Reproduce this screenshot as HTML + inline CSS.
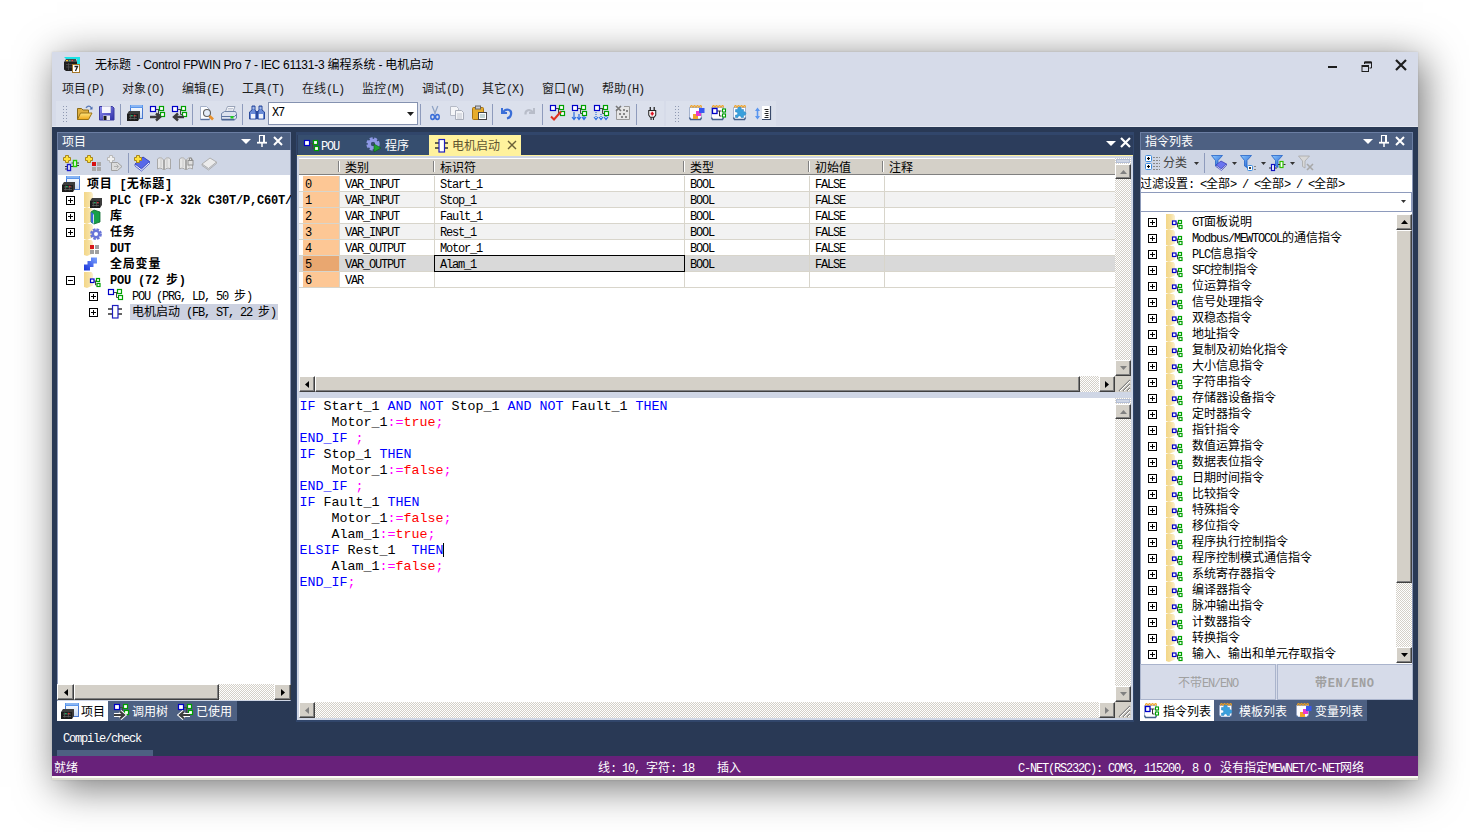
<!DOCTYPE html><html lang="zh"><head><meta charset="utf-8"><title>Control FPWIN Pro 7</title><style>
html,body{margin:0;padding:0}
body{width:1470px;height:832px;background:#fff;position:relative;overflow:hidden;
 font-family:"Liberation Mono","Noto Sans CJK SC",monospace;font-size:12px;color:#000}
.a{position:absolute;box-sizing:border-box}
.t{white-space:pre;padding-top:1px}
.l{font-family:"Liberation Mono",monospace;font-size:12px;letter-spacing:-1.2px}
.b{font-weight:bold;letter-spacing:0.8px}
.b .l{letter-spacing:-0.2px}
.w{color:#fff}
#win{left:52px;top:52px;width:1366px;height:728px;background:#d6dbe9;
 box-shadow:5px 7px 38px rgba(0,0,0,.56),0 0 2px rgba(0,0,0,.12)}
.code{font-family:"Liberation Mono",monospace;font-size:13.333px;white-space:pre}
.k{color:#0000ff}.p{color:#ff00ff}.r{color:#ff0000}
.dot{background-image:conic-gradient(#fff 25%,#d4d0c8 0 50%,#fff 0 75%,#d4d0c8 0);background-size:2px 2px}
.btn{background:#d4d0c8;border:1px solid;border-color:#fff #404040 #404040 #fff;box-shadow:inset -1px -1px 0 #808080}
svg{position:absolute;overflow:visible}
</style></head><body>
<div id="win" class="a"></div>
<div class="a t" style="left:95px;top:56px;height:16px;line-height:16px;font-family:'Liberation Sans','Noto Sans CJK SC',sans-serif;font-size:12px;color:#000">无标题<span style="letter-spacing:-0.27px;padding-left:2.5px"> - Control FPWIN Pro 7 - IEC 61131-3 </span>编程系统<span style="letter-spacing:-0.27px"> - </span>电机启动</div>
<svg style="left:64px;top:57px" width="16" height="16" viewBox="0 0 16 16"><path d="M0 0h16v7h-3V2H2z" fill="#19e3e6"/><path d="M0 5l2-3h10l1 3z" fill="#4a4a4a"/><path d="M0 5h13v9H2l-2-1.500z" fill="#1e1e1e"/><path d="M2 7.500h6M2 10h6M4.500 6v7" stroke="#555" stroke-width="0.700"/><rect x="2" y="3" width="2" height="1.200" fill="#ffcc33"/><rect x="5" y="3" width="1.500" height="1.200" fill="#40c080"/><rect x="7.500" y="3" width="1.500" height="1.200" fill="#e05050"/><rect x="8.500" y="7.500" width="7" height="8" fill="#fff" stroke="#a5772a" stroke-width="1"/><path d="M10.500 9.500h3l-2 4.500" stroke="#222" stroke-width="1.300" fill="none"/></svg>
<div class="a " style="left:1328px;top:66px;width:9px;height:2px;background:#1e1e1e"></div>
<svg style="left:1361px;top:61px" width="12" height="12" viewBox="0 0 12 12" fill="none" stroke="#1e1e1e"><path d="M3.5 3V1h7v6h-2" stroke-width="1"/><path d="M3.5 1.5h7" stroke-width="2"/><rect x="1" y="4.5" width="6.5" height="6" stroke-width="1"/><path d="M1 5h6.5" stroke-width="2"/></svg>
<svg style="left:1395px;top:59px" width="12" height="12" viewBox="0 0 12 12"><path d="M1 1l10 10M11 1L1 11" stroke="#1e1e1e" stroke-width="2.2"/></svg>
<div class="a t " style="left:62px;top:81px;height:16px;line-height:16px;color:#1e1e1e">项目<span class="l">(P)</span></div>
<div class="a t " style="left:122px;top:81px;height:16px;line-height:16px;color:#1e1e1e">对象<span class="l">(O)</span></div>
<div class="a t " style="left:182px;top:81px;height:16px;line-height:16px;color:#1e1e1e">编辑<span class="l">(E)</span></div>
<div class="a t " style="left:242px;top:81px;height:16px;line-height:16px;color:#1e1e1e">工具<span class="l">(T)</span></div>
<div class="a t " style="left:302px;top:81px;height:16px;line-height:16px;color:#1e1e1e">在线<span class="l">(L)</span></div>
<div class="a t " style="left:362px;top:81px;height:16px;line-height:16px;color:#1e1e1e">监控<span class="l">(M)</span></div>
<div class="a t " style="left:422px;top:81px;height:16px;line-height:16px;color:#1e1e1e">调试<span class="l">(D)</span></div>
<div class="a t " style="left:482px;top:81px;height:16px;line-height:16px;color:#1e1e1e">其它<span class="l">(X)</span></div>
<div class="a t " style="left:542px;top:81px;height:16px;line-height:16px;color:#1e1e1e">窗口<span class="l">(W)</span></div>
<div class="a t " style="left:602px;top:81px;height:16px;line-height:16px;color:#1e1e1e">帮助<span class="l">(H)</span></div>
<div class="a " style="left:56px;top:101px;width:608px;height:25px;background:#dbe0ec"></div>
<div class="a " style="left:666px;top:101px;width:110px;height:25px;background:#dbe0ec"></div>
<div class="a " style="left:52px;top:126px;width:1366px;height:1px;background:#e4e8f1"></div>
<div class="a " style="left:62px;top:105px;width:5px;height:18px;background-image:radial-gradient(#7c87a3 0.7px,transparent 0.8px);background-size:3px 3px;opacity:.8"></div>
<div class="a " style="left:674px;top:105px;width:5px;height:18px;background-image:radial-gradient(#7c87a3 0.7px,transparent 0.8px);background-size:3px 3px;opacity:.8"></div>
<div class="a " style="left:120px;top:104px;width:1px;height:21px;background:#8e9bbc"></div>
<div class="a " style="left:192px;top:104px;width:1px;height:21px;background:#8e9bbc"></div>
<div class="a " style="left:242px;top:104px;width:1px;height:21px;background:#8e9bbc"></div>
<div class="a " style="left:420px;top:104px;width:1px;height:21px;background:#8e9bbc"></div>
<div class="a " style="left:492px;top:104px;width:1px;height:21px;background:#8e9bbc"></div>
<div class="a " style="left:542px;top:104px;width:1px;height:21px;background:#8e9bbc"></div>
<div class="a " style="left:636px;top:104px;width:1px;height:21px;background:#8e9bbc"></div>
<svg style="left:77px;top:105px" width="16" height="16" viewBox="0 0 16 16"><defs><linearGradient id="gy" x1="0" y1="0" x2="0" y2="1"><stop offset="0" stop-color="#ffe680"/><stop offset="1" stop-color="#f0a818"/></linearGradient><linearGradient id="gb" x1="0" y1="0" x2="1" y2="1"><stop offset="0" stop-color="#8f8ff0"/><stop offset="1" stop-color="#3030a8"/></linearGradient><linearGradient id="gw" x1="0" y1="0" x2="0" y2="1"><stop offset="0" stop-color="#ffffff"/><stop offset="1" stop-color="#c4d8f4"/></linearGradient></defs><path d="M0.500 14.500V3.500h4l1.500 1.500h5.500v3" fill="#e0b040" stroke="#8a6a18"/><path d="M0.500 14.500l3-6.500h11.500l-3.500 6.500z" fill="url(#gy)" stroke="#9a7418"/><path d="M9 3c1.500-2.500 4.500-2.500 5.500 0.500" stroke="#5a7ab8" stroke-width="1.300" fill="none"/><path d="M15.500 1.500v3h-3z" fill="#4a6ab0"/></svg>
<svg style="left:99px;top:105px" width="16" height="16" viewBox="0 0 16 16"><defs><linearGradient id="gy" x1="0" y1="0" x2="0" y2="1"><stop offset="0" stop-color="#ffe680"/><stop offset="1" stop-color="#f0a818"/></linearGradient><linearGradient id="gb" x1="0" y1="0" x2="1" y2="1"><stop offset="0" stop-color="#8f8ff0"/><stop offset="1" stop-color="#3030a8"/></linearGradient><linearGradient id="gw" x1="0" y1="0" x2="0" y2="1"><stop offset="0" stop-color="#ffffff"/><stop offset="1" stop-color="#c4d8f4"/></linearGradient></defs><path d="M0.500 1.500h13l1.500 1.500v12H0.500z" fill="url(#gb)" stroke="#3a3aa0"/><rect x="3" y="1.500" width="8.500" height="6.500" fill="#f6f6fc"/><path d="M3 1.500h8.500v6.500" fill="none" stroke="#c8c8e0"/><rect x="4" y="10.500" width="7" height="4.500" fill="#e8e8f0"/><rect x="4.500" y="11" width="3" height="4" fill="#181818"/></svg>
<svg style="left:127px;top:105px" width="16" height="16" viewBox="0 0 16 16"><defs><linearGradient id="gy" x1="0" y1="0" x2="0" y2="1"><stop offset="0" stop-color="#ffe680"/><stop offset="1" stop-color="#f0a818"/></linearGradient><linearGradient id="gb" x1="0" y1="0" x2="1" y2="1"><stop offset="0" stop-color="#8f8ff0"/><stop offset="1" stop-color="#3030a8"/></linearGradient><linearGradient id="gw" x1="0" y1="0" x2="0" y2="1"><stop offset="0" stop-color="#ffffff"/><stop offset="1" stop-color="#c4d8f4"/></linearGradient></defs><g transform="translate(3,0)"><rect x="0.500" y="0.500" width="12" height="13" fill="url(#gw)" stroke="#4878d0"/><rect x="0" y="0" width="13" height="3" fill="#5a96ec"/><path d="M1 1h11" stroke="#b8d4fa"/></g><g transform="translate(0,6)"><path d="M0 3l2-3h11 v7 l-2 3H0z" fill="#3c3c3c"/><path d="M0 3h11 v7 H0z" fill="#1c1c1c"/><path d="M2 5h8 M2 7.500h8 M3.66667 3.500v5 M7.33333 3.500v5" stroke="#6a6a6a" stroke-width="0.700"/><rect x="4" y="4" width="1.600" height="1.200" fill="#20b060"/><rect x="7" y="4" width="1.600" height="1.200" fill="#e03030"/></g></svg>
<svg style="left:149px;top:105px" width="16" height="16" viewBox="0 0 16 16"><g transform="translate(1,1)"><path d="M6 3.5h3M8.5 3.5v5h2" stroke="#444" fill="none"/><rect x="0.5" y="0.5" width="5" height="5" fill="#fff" stroke="#0000c8" stroke-width="1.2"/><rect x="9.5" y="0.5" width="4" height="4" fill="#fff" stroke="#00a000" stroke-width="1.2"/><rect x="10.5" y="6.5" width="4" height="4" fill="#fff" stroke="#00a000" stroke-width="1.2"/></g><path d="M1 12h10M7 8.500l4 3.500-4 3.500" stroke="#3c3c3c" stroke-width="2.400" fill="none"/></svg>
<svg style="left:171px;top:105px" width="16" height="16" viewBox="0 0 16 16"><g transform="translate(1,1)"><path d="M6 3.5h3M8.5 3.5v5h2" stroke="#444" fill="none"/><rect x="0.5" y="0.5" width="5" height="5" fill="#fff" stroke="#0000c8" stroke-width="1.2"/><rect x="9.5" y="0.5" width="4" height="4" fill="#fff" stroke="#00a000" stroke-width="1.2"/><rect x="10.5" y="6.5" width="4" height="4" fill="#fff" stroke="#00a000" stroke-width="1.2"/></g><path d="M3 12h10M7 8.500l-4 3.500 4 3.500" stroke="#3c3c3c" stroke-width="2.400" fill="none"/></svg>
<svg style="left:199px;top:105px" width="16" height="16" viewBox="0 0 16 16"><path d="M1.500 1.500h6l3 3v10h-9z" fill="#fcfdff" stroke="#a4b0c8"/><path d="M1.500 14.500h9" stroke="#5870a0" stroke-width="1.400"/><circle cx="8" cy="8" r="3.500" fill="#e4ecf8" stroke="#606060" stroke-width="1.100"/><path d="M10.500 11l3.500 3.500" stroke="#e8902c" stroke-width="2.600"/></svg>
<svg style="left:221px;top:105px" width="16" height="16" viewBox="0 0 16 16"><path d="M4.500 6.500l2-5h7.500l-2 5z" fill="#f8f9fc" stroke="#9aa4b8"/><path d="M7 3.500h5M6.500 5h5" stroke="#b0b8c8" stroke-width="0.800"/><path d="M0.500 8.500l3-2h11l1 2v4.500l-2 2H0.500z" fill="#dce2ee" stroke="#7084a8"/><path d="M0.500 11.500h13l2-2" stroke="#5c74a0" fill="none"/><path d="M1 14.500h12.500" stroke="#4a6494" stroke-width="1.400"/><rect x="9.500" y="11" width="3" height="2.500" fill="#20d020"/></svg>
<svg style="left:249px;top:105px" width="16" height="16" viewBox="0 0 16 16"><path d="M3 1h3v4l1.500 2v7h-7V7l2.500-2z" fill="#6a8cd8" stroke="#2a4a9c"/><path d="M10 1h3l0 4 2.500 2v7h-7V7l1.500-2z" fill="#6a8cd8" stroke="#2a4a9c"/><rect x="6.500" y="6" width="3" height="3" fill="#2a4a9c"/><rect x="2" y="9" width="4" height="4.500" fill="#f0f4fc"/><rect x="10" y="9" width="4" height="4.500" fill="#f0f4fc"/><path d="M3.500 3h2M10.500 3h2" stroke="#dce6fa"/></svg>
<svg style="left:427px;top:105px" width="16" height="16" viewBox="0 0 16 16"><g transform="translate(2,0) scale(0.8,1)"><path d="M4 1l4 8M11 1L7 9" stroke="#8fa3c4" stroke-width="1.6" fill="none"/><circle cx="4.5" cy="12" r="2.300" fill="none" stroke="#3a6ed8" stroke-width="1.800"/><circle cx="10.500" cy="12" r="2.300" fill="none" stroke="#3a6ed8" stroke-width="1.800"/></g></svg>
<svg style="left:449px;top:105px" width="16" height="16" viewBox="0 0 16 16"><path d="M1.500 1.500h6l2 2v7h-8z" fill="#f4f5f8" stroke="#b5bac6"/><path d="M6.500 5.500h6l2 2v7h-8z" fill="#f4f5f8" stroke="#a9aebb"/><path d="M8 9h5M8 11h5M8 13h5" stroke="#c0c4ce"/></svg>
<svg style="left:471px;top:105px" width="16" height="16" viewBox="0 0 16 16"><rect x="1.500" y="2.500" width="11" height="12" rx="1" fill="#e6ac2c" stroke="#a87310"/><rect x="4.500" y="1" width="5" height="3" fill="#c9ccd4" stroke="#666"/><rect x="7.500" y="7.500" width="8" height="7" fill="#fff" stroke="#444"/><path d="M9 10h5M9 12h5" stroke="#8aa"/></svg>
<svg style="left:499px;top:105px" width="16" height="16" viewBox="0 0 16 16"><path d="M3 3v5h5" fill="none" stroke="#3a6ed8" stroke-width="2"/><path d="M4 7.500c3-5 9-3 8 2-0.500 2.500-2 3.500-4 4" fill="none" stroke="#3a6ed8" stroke-width="2.200"/></svg>
<svg style="left:521px;top:105px" width="16" height="16" viewBox="0 0 16 16"><path d="M13 3v5H8" fill="none" stroke="#b8bdc9" stroke-width="2"/><path d="M12 7.500c-3-4-8-2.500-7.500 2" fill="none" stroke="#b8bdc9" stroke-width="2.200"/></svg>
<svg style="left:549px;top:105px" width="16" height="16" viewBox="0 0 16 16"><g transform="translate(1,0)"><path d="M6 3.5h3M8.5 3.5v5h2" stroke="#444" fill="none"/><rect x="0.5" y="0.5" width="5" height="5" fill="#fff" stroke="#0000c8" stroke-width="1.2"/><rect x="9.5" y="0.5" width="4" height="4" fill="#fff" stroke="#00a000" stroke-width="1.2"/><rect x="10.5" y="6.5" width="4" height="4" fill="#fff" stroke="#00a000" stroke-width="1.2"/></g><path d="M2 11.500l3 3 7-8" stroke="#e03020" stroke-width="2" fill="none"/></svg>
<svg style="left:571px;top:105px" width="16" height="16" viewBox="0 0 16 16"><g transform="translate(1,0)"><path d="M6 3.5h3M8.5 3.5v5h2" stroke="#444" fill="none"/><rect x="0.5" y="0.5" width="5" height="5" fill="#fff" stroke="#0000c8" stroke-width="1.2"/><rect x="9.5" y="0.5" width="4" height="4" fill="#fff" stroke="#00a000" stroke-width="1.2"/><rect x="10.5" y="6.5" width="4" height="4" fill="#fff" stroke="#00a000" stroke-width="1.2"/></g><path d="M3 7v7M8 9v5M13 11v3M1 12l2 2.500 2-2.500M6 12l2 2.500 2-2.500M11 12l2 2.500 2-2.500" stroke="#2a6ce0" stroke-width="1.200" fill="none"/></svg>
<svg style="left:593px;top:105px" width="16" height="16" viewBox="0 0 16 16"><g transform="translate(1,0)"><path d="M6 3.5h3M8.5 3.5v5h2" stroke="#444" fill="none"/><rect x="0.5" y="0.5" width="5" height="5" fill="#fff" stroke="#0000c8" stroke-width="1.2"/><rect x="9.5" y="0.5" width="4" height="4" fill="#fff" stroke="#00a000" stroke-width="1.2"/><rect x="10.5" y="6.5" width="4" height="4" fill="#fff" stroke="#00a000" stroke-width="1.2"/></g><path d="M3 7v7M8 9v5M13 11v3" stroke="#2a6ce0" stroke-width="1.200" stroke-dasharray="1 1" fill="none"/><path d="M1 12l2 2.500 2-2.500M6 12l2 2.500 2-2.500M11 12l2 2.500 2-2.500" stroke="#2a6ce0" stroke-width="1.200" fill="none"/></svg>
<svg style="left:615px;top:105px" width="16" height="16" viewBox="0 0 16 16"><path d="M1.500 4v10.500h13V1.500H9" fill="#e6e6e6" stroke="#9a9a9a"/><path d="M1 1l5 5M6 1L1 6" stroke="#777" stroke-width="1.600"/><g fill="#888"><rect x="4" y="8" width="2" height="2"/><rect x="8" y="8" width="2" height="2"/><rect x="11" y="5" width="2" height="2"/><rect x="6" y="11" width="2" height="2"/><rect x="10" y="11" width="2" height="2"/><rect x="8" y="4" width="2" height="2"/></g></svg>
<svg style="left:644px;top:105px" width="16" height="16" viewBox="0 0 16 16"><g transform="translate(2,1) scale(0.78,0.9)"><path d="M5.500 1v4M10.500 1v4" stroke="#222" stroke-width="1.600"/><path d="M3.500 5h9v5l-2 2.500h-5l-2-2.500z" fill="#f4f4f4" stroke="#222" stroke-width="1.300"/><path d="M6.500 12.500v3M9.500 12.500v3" stroke="#222" stroke-width="1.400"/><path d="M6 8.500h4M8 6.500v4" stroke="#e01020" stroke-width="1.800"/></g></svg>
<svg style="left:689px;top:105px" width="16" height="16" viewBox="0 0 16 16"><path d="M0.500 2.500h12v10.500l-1 1.500h-10l-1-1.500z" fill="#fdfdff" stroke="#93a3c4" stroke-width="0.800"/><path d="M0.500 12.500l1 2h10l1-2" stroke="#44608c" stroke-width="1.500" fill="none"/><path d="M1.500 2.500c0-2.500 2-2.500 2 0M4.500 2.500c0-2.500 2-2.500 2 0M7.500 2.500c0-2.500 2-2.500 2 0M10.500 2.500c0-2.500 2-2.500 2 0" stroke="#f0a020" fill="none" stroke-width="1.100"/><rect x="4" y="9" width="5" height="5" fill="#f0a428"/><rect x="7" y="6" width="5" height="5" fill="#e838d0"/><rect x="10" y="3" width="5.500" height="5" fill="#3858f0"/></svg>
<svg style="left:711px;top:105px" width="16" height="16" viewBox="0 0 16 16"><path d="M0.500 2.500h12v10.500l-1 1.500h-10l-1-1.500z" fill="#fdfdff" stroke="#93a3c4" stroke-width="0.800"/><path d="M0.500 12.500l1 2h10l1-2" stroke="#44608c" stroke-width="1.500" fill="none"/><path d="M1.500 2.500c0-2.500 2-2.500 2 0M4.500 2.500c0-2.500 2-2.500 2 0M7.500 2.500c0-2.500 2-2.500 2 0M10.500 2.500c0-2.500 2-2.500 2 0" stroke="#f0a020" fill="none" stroke-width="1.100"/><path d="M6 6h4.500M8.500 6v5h2" stroke="#333" fill="none"/><rect x="1.500" y="3.500" width="4.500" height="5" fill="#fff" stroke="#0000c8" stroke-width="1.300"/><rect x="11.500" y="4" width="3" height="3" fill="#fff" stroke="#00a000" stroke-width="1.100"/><rect x="11.500" y="9" width="3" height="3" fill="#fff" stroke="#00a000" stroke-width="1.100"/></svg>
<svg style="left:733px;top:105px" width="16" height="16" viewBox="0 0 16 16"><path d="M0.500 2.500h12v10.500l-1 1.500h-10l-1-1.500z" fill="#fdfdff" stroke="#93a3c4" stroke-width="0.800"/><path d="M0.500 12.500l1 2h10l1-2" stroke="#44608c" stroke-width="1.500" fill="none"/><path d="M1.500 2.500c0-2.500 2-2.500 2 0M4.500 2.500c0-2.500 2-2.500 2 0M7.500 2.500c0-2.500 2-2.500 2 0M10.500 2.500c0-2.500 2-2.500 2 0" stroke="#f0a020" fill="none" stroke-width="1.100"/><path d="M2.500 4.500h2.300a1.800 1.800 0 1 1 3.400 0h2.300v2.300a1.800 1.800 0 1 1 0 3.400v2.300H8.200a1.600 1.600 0 1 0-3.400 0H2.500v-2.500a1.600 1.600 0 1 0 0-3z" fill="#3aa0dc" stroke="#2080c0" stroke-width="0.500"/></svg>
<svg style="left:755px;top:105px" width="16" height="16" viewBox="0 0 16 16"><path d="M2.500 4v9" stroke="#5a96f0" stroke-width="1.600" fill="none"/><path d="M0 6l2.500-3.500L5 6zM0 11l2.500 3.500L5 11z" fill="#5a96f0"/><rect x="7" y="1" width="8.500" height="13.500" fill="#fff"/><path d="M15.500 1v13.500H7" stroke="#3a4a6a" stroke-width="1.200" fill="none"/><path d="M9.500 4.500h4M10.500 6.500h3M9.500 8.500h4M10.500 10.500h3M9.500 12.500h4" stroke="#222"/></svg>
<div class="a " style="left:268px;top:102px;width:150px;height:23px;background:#fff;border:1px solid #8592b0"></div>
<div class="a t " style="left:272px;top:104px;height:16px;line-height:16px;"><span class="l">X7</span></div>
<svg style="left:407px;top:112px" width="7" height="4" viewBox="0 0 7 4"><path d="M0 0h7L3.500 4z" fill="#1e1e1e"/></svg>
<div class="a " style="left:52px;top:127px;width:1366px;height:629px;background:#293955"></div>
<div class="a " style="left:57px;top:132px;width:234px;height:18px;background:#4d6082;border:1px solid #6b7ea3;border-bottom:none"></div>
<div class="a t " style="left:62px;top:134px;height:16px;line-height:16px;color:#fff">项目</div>
<svg style="left:241px;top:139px" width="10" height="5" viewBox="0 0 10 5"><path d="M0 0h10L5 5z" fill="#fff"/></svg>
<svg style="left:257px;top:135px" width="10" height="12" viewBox="0 0 10 12" fill="none" stroke="#fff"><path d="M2.500 0.500h5M2.500 0v7" stroke-width="1.100"/><path d="M7 0v7" stroke-width="2"/><path d="M0 7.700h10" stroke-width="1.800"/><path d="M5 8v4" stroke-width="1.500"/></svg>
<svg style="left:273px;top:136px" width="10" height="10" viewBox="0 0 10 10"><path d="M1 1l8 8M9 1L1 9" stroke="#fff" stroke-width="2"/></svg>
<div class="a " style="left:57px;top:150px;width:234px;height:25px;background:#cfd6e5"></div>
<div class="a " style="left:57px;top:175px;width:234px;height:509px;background:#fff"></div>
<div class="a " style="left:57px;top:700px;width:234px;height:1px;background:#cfd6e5"></div>
<div class="a " style="left:290px;top:150px;width:1px;height:551px;background:#8c99b8"></div>
<div class="a " style="left:57px;top:150px;width:1px;height:551px;background:#8c99b8"></div>
<svg style="left:63px;top:155px" width="16" height="16" viewBox="0 0 16 16"><path transform="translate(0,0)" d="M2.500 0.500h3v2h2v3h-2v2h-3v-2h-2v-3h2z" fill="#ffe23c" stroke="#a8861c"/><path d="M2 11.500h2.500M8 11.500h2M2 14h2.500M8.500 8h2M14 8h2M14 10.500h2" stroke="#333"/><rect x="4.500" y="9.500" width="3" height="6" fill="#fff" stroke="#1818c8" stroke-width="1.400"/><rect x="10.500" y="5.500" width="3" height="6" fill="#fff" stroke="#20c800" stroke-width="1.400"/></svg>
<svg style="left:85px;top:155px" width="16" height="16" viewBox="0 0 16 16"><path transform="translate(0,0)" d="M2.500 0.500h3v2h2v3h-2v2h-3v-2h-2v-3h2z" fill="#ffe23c" stroke="#a8861c"/><rect x="7" y="7" width="4" height="4" fill="#d81010"/><rect x="12" y="7" width="4" height="4" fill="#a8a8a8"/><rect x="7" y="12" width="4" height="4" fill="#a8a8a8"/><rect x="12" y="12" width="4" height="4" fill="#a8a8a8"/></svg>
<svg style="left:107px;top:155px" width="16" height="16" viewBox="0 0 16 16"><path transform="translate(0,0)" d="M2.500 0.500h3v2h2v3h-2v2h-3v-2h-2v-3h2z" fill="#f0f0f0" stroke="#b8b8b8"/><path d="M4.500 7.500h6l4.500 4-4.500 4h-6z" fill="#dcdcdc" stroke="#a0a0a0"/><path d="M7 11.500h4M9.500 9.500l2 2-2 2" stroke="#b0b0b0" fill="none"/></svg>
<svg style="left:134px;top:155px" width="16" height="16" viewBox="0 0 16 16"><path d="M1 9l8-7 6.500 4.500-8 7.500z" fill="#5868e8" stroke="#3444c0"/><path d="M1 9v2l6.500 5 8-7.500v-2l-8 7.500z" fill="#fff" stroke="#3444c0" stroke-width="0.800"/><path transform="translate(0,0)" d="M2.500 0.500h3v2h2v3h-2v2h-3v-2h-2v-3h2z" fill="#ffe23c" stroke="#a8861c"/></svg>
<svg style="left:156px;top:155px" width="16" height="16" viewBox="0 0 16 16"><path d="M1.500 4c2.500-2 4.500-1.500 6 1v10c-1.500-2-3.500-2.500-6-1zM14.500 4c-2.500-2-4.500-1.500-6 1v10c1.500-2 3.500-2.500 6-1z" fill="#e6e6e6" stroke="#a8a8a8"/><path d="M5 2v10M11 2v10" stroke="#c8c8c8"/></svg>
<svg style="left:178px;top:155px" width="16" height="16" viewBox="0 0 16 16"><path d="M1.500 4c2.500-2 4.500-1.500 6 1v10c-1.500-2-3.500-2.500-6-1zM14.500 4c-2.500-2-4.500-1.500-6 1v10c1.500-2 3.500-2.500 6-1z" fill="#e6e6e6" stroke="#a8a8a8"/><path d="M5 2v10M11 2v10" stroke="#c8c8c8"/><rect x="10" y="5.500" width="5" height="4.500" fill="#e0e0e0" stroke="#909090"/><path d="M11.500 5.500v-2.500h2v2.500" stroke="#909090" fill="none"/></svg>
<svg style="left:201px;top:155px" width="16" height="16" viewBox="0 0 16 16"><path d="M1 9l8-6 6.500 4-8 6.500z" fill="#ececec" stroke="#b0b0b0"/><path d="M1 9v1.500l6.500 4.500 8-6.500V7" fill="none" stroke="#b0b0b0"/></svg>
<div class="a " style="left:128px;top:153px;width:1px;height:20px;background:#8e9bbc"></div>
<svg style="left:62px;top:176px" width="18" height="16" viewBox="0 0 18 16"><defs><linearGradient id="gy" x1="0" y1="0" x2="0" y2="1"><stop offset="0" stop-color="#ffe680"/><stop offset="1" stop-color="#f0a818"/></linearGradient><linearGradient id="gb" x1="0" y1="0" x2="1" y2="1"><stop offset="0" stop-color="#8f8ff0"/><stop offset="1" stop-color="#3030a8"/></linearGradient><linearGradient id="gw" x1="0" y1="0" x2="0" y2="1"><stop offset="0" stop-color="#ffffff"/><stop offset="1" stop-color="#c4d8f4"/></linearGradient></defs><g transform="translate(4,0)"><rect x="0.500" y="0.500" width="13" height="13" fill="url(#gw)" stroke="#4878d0"/><rect x="0" y="0" width="14" height="3" fill="#5a96ec"/><path d="M1 1h12" stroke="#b8d4fa"/></g><g transform="translate(0,6)"><path d="M0 3l2-3h11 v7 l-2 3H0z" fill="#3c3c3c"/><path d="M0 3h11 v7 H0z" fill="#1c1c1c"/><path d="M2 5h8 M2 7.500h8 M3.66667 3.500v5 M7.33333 3.500v5" stroke="#6a6a6a" stroke-width="0.700"/><rect x="4" y="4" width="1.600" height="1.200" fill="#20b060"/><rect x="7" y="4" width="1.600" height="1.200" fill="#e03030"/></g></svg>
<div class="a t b" style="left:87px;top:176px;height:16px;line-height:16px;">项目<span class="l"> [</span>无标题<span class="l">]</span></div>
<svg style="left:66px;top:196px" width="9" height="9" viewBox="0 0 9 9"><rect x="0.500" y="0.500" width="8" height="8" fill="#fff" stroke="#000"/><path d="M2 4.500h5M4.500 2v5" stroke="#000"/></svg>
<svg style="left:84px;top:192px" width="18" height="16" viewBox="0 0 18 16"><defs><linearGradient id="gfo" x1="0" y1="0" x2="1" y2="0"><stop offset="0" stop-color="#f3d688"/><stop offset="0.550" stop-color="#f6e0a0"/><stop offset="1" stop-color="#fbf0d0"/></linearGradient></defs><path d="M0 0h7.500l1.500 2v11.500l-6 2.500-3-1z" fill="url(#gfo)"/><g transform="translate(6,6)"><path d="M0 3l2-3h10 v7 l-2 3H0z" fill="#3c3c3c"/><path d="M0 3h10 v7 H0z" fill="#1c1c1c"/><path d="M2 5h7 M2 7.500h7 M3.33333 3.500v5 M6.66667 3.500v5" stroke="#6a6a6a" stroke-width="0.700"/><rect x="4" y="4" width="1.600" height="1.200" fill="#20b060"/><rect x="7" y="4" width="1.600" height="1.200" fill="#e03030"/></g></svg>
<div class="a t b" style="left:110px;top:192px;height:16px;line-height:16px;max-width:181px;overflow:hidden"><span class="l">PLC (FP-X 32k C30T/P,C60T/</span></div>
<svg style="left:66px;top:212px" width="9" height="9" viewBox="0 0 9 9"><rect x="0.500" y="0.500" width="8" height="8" fill="#fff" stroke="#000"/><path d="M2 4.500h5M4.500 2v5" stroke="#000"/></svg>
<svg style="left:84px;top:208px" width="18" height="16" viewBox="0 0 18 16"><defs><linearGradient id="gfo" x1="0" y1="0" x2="1" y2="0"><stop offset="0" stop-color="#f3d688"/><stop offset="0.550" stop-color="#f6e0a0"/><stop offset="1" stop-color="#fbf0d0"/></linearGradient></defs><path d="M0 0h7.500l1.500 2v11.500l-6 2.500-3-1z" fill="url(#gfo)"/><path d="M7 4l3-2 6 2v10l-6 2-3-2z" fill="#18a048" stroke="#0c6c30" stroke-width="0.800"/><path d="M7 4v10l3 2V6z" fill="#3a68d8"/><path d="M9.500 6.500v9" stroke="#cde" /></svg>
<div class="a t b" style="left:110px;top:208px;height:16px;line-height:16px;max-width:181px;overflow:hidden">库</div>
<svg style="left:66px;top:228px" width="9" height="9" viewBox="0 0 9 9"><rect x="0.500" y="0.500" width="8" height="8" fill="#fff" stroke="#000"/><path d="M2 4.500h5M4.500 2v5" stroke="#000"/></svg>
<svg style="left:84px;top:224px" width="18" height="16" viewBox="0 0 18 16"><defs><linearGradient id="gfo" x1="0" y1="0" x2="1" y2="0"><stop offset="0" stop-color="#f3d688"/><stop offset="0.550" stop-color="#f6e0a0"/><stop offset="1" stop-color="#fbf0d0"/></linearGradient></defs><path d="M0 0h7.500l1.500 2v11.500l-6 2.500-3-1z" fill="url(#gfo)"/><circle cx="12" cy="10" r="4.200" fill="none" stroke="#6a76d8" stroke-width="3.400" stroke-dasharray="2.200 1.100"/><circle cx="12" cy="10" r="3.200" fill="none" stroke="#6a76d8" stroke-width="2.400"/></svg>
<div class="a t b" style="left:110px;top:224px;height:16px;line-height:16px;max-width:181px;overflow:hidden">任务</div>
<svg style="left:84px;top:240px" width="18" height="16" viewBox="0 0 18 16"><defs><linearGradient id="gfo" x1="0" y1="0" x2="1" y2="0"><stop offset="0" stop-color="#f3d688"/><stop offset="0.550" stop-color="#f6e0a0"/><stop offset="1" stop-color="#fbf0d0"/></linearGradient></defs><path d="M0 0h7.500l1.500 2v11.500l-6 2.500-3-1z" fill="url(#gfo)"/><rect x="6" y="5" width="4" height="4" fill="#d81818"/><rect x="11" y="5" width="4" height="4" fill="#a0a0a0"/><rect x="6" y="10" width="4" height="4" fill="#a0a0a0"/><rect x="11" y="10" width="4" height="4" fill="#a0a0a0"/></svg>
<div class="a t b" style="left:110px;top:240px;height:16px;line-height:16px;max-width:181px;overflow:hidden"><span class="l">DUT</span></div>
<svg style="left:84px;top:256px" width="16" height="16" viewBox="0 0 16 16"><defs><linearGradient id="gs" x1="0" y1="1" x2="1" y2="0"><stop offset="0" stop-color="#1830d8"/><stop offset="1" stop-color="#7aa4ff"/></linearGradient></defs><path d="M0 14.500V8.500h3.500V5h3.500V1.500h6v6H9.500v3.500H6v3.500z" fill="url(#gs)"/></svg>
<div class="a t b" style="left:110px;top:256px;height:16px;line-height:16px;max-width:181px;overflow:hidden">全局变量</div>
<svg style="left:66px;top:276px" width="9" height="9" viewBox="0 0 9 9"><rect x="0.500" y="0.500" width="8" height="8" fill="#fff" stroke="#000"/><path d="M2 4.500h5" stroke="#000"/></svg>
<svg style="left:84px;top:272px" width="18" height="16" viewBox="0 0 18 16"><defs><linearGradient id="gfo" x1="0" y1="0" x2="1" y2="0"><stop offset="0" stop-color="#f3d688"/><stop offset="0.550" stop-color="#f6e0a0"/><stop offset="1" stop-color="#fbf0d0"/></linearGradient></defs><path d="M0 0h7.500l1.500 2v11.500l-6 2.500-3-1z" fill="url(#gfo)"/><path d="M10 9h2M11.500 9v4h1" stroke="#444" fill="none"/><rect x="6.500" y="7" width="3.500" height="3.500" fill="#fff" stroke="#0000c8" stroke-width="1.200"/><rect x="12.500" y="6.500" width="3" height="3" fill="#fff" stroke="#00a000" stroke-width="1.200"/><rect x="13" y="11.500" width="3" height="3" fill="#fff" stroke="#00a000" stroke-width="1.200"/></svg>
<div class="a t b" style="left:110px;top:272px;height:16px;line-height:16px;max-width:181px;overflow:hidden"><span class="l">POU (72 </span>步<span class="l">)</span></div>
<svg style="left:89px;top:292px" width="9" height="9" viewBox="0 0 9 9"><rect x="0.500" y="0.500" width="8" height="8" fill="#fff" stroke="#000"/><path d="M2 4.500h5M4.500 2v5" stroke="#000"/></svg>
<svg style="left:108px;top:289px" width="16" height="12" viewBox="0 0 16 12"><g transform="translate(0,0)"><path d="M6 3.5h3M8.5 3.5v5h2" stroke="#444" fill="none"/><rect x="0.5" y="0.5" width="5" height="5" fill="#fff" stroke="#0000c8" stroke-width="1.2"/><rect x="9.5" y="0.5" width="4" height="4" fill="#fff" stroke="#00a000" stroke-width="1.2"/><rect x="10.5" y="6.5" width="4" height="4" fill="#fff" stroke="#00a000" stroke-width="1.2"/></g></svg>
<div class="a t " style="left:132px;top:288px;height:16px;line-height:16px;"><span class="l">POU (PRG, LD, 50 </span>步<span class="l">)</span></div>
<svg style="left:89px;top:308px" width="9" height="9" viewBox="0 0 9 9"><rect x="0.500" y="0.500" width="8" height="8" fill="#fff" stroke="#000"/><path d="M2 4.500h5M4.500 2v5" stroke="#000"/></svg>
<svg style="left:108px;top:304px" width="16" height="16" viewBox="0 0 16 16"><path d="M0 5h4M0 10h4M10 5h4M10 10h4" stroke="#333" stroke-width="1.400"/><rect x="4.500" y="1.500" width="5.500" height="12.500" fill="#fff" stroke="#2020c0" stroke-width="1.200"/></svg>
<div class="a " style="left:130px;top:304px;width:148px;height:16px;background:#ccd1e0"></div>
<div class="a t " style="left:132px;top:304px;height:16px;line-height:16px;">电机启动<span class="l"> (FB, ST, 22 </span>步<span class="l">)</span></div>
<div class="a dot" style="left:57px;top:684px;width:234px;height:16px;"></div>
<div class="a btn" style="left:57px;top:684px;width:17px;height:16px;"><svg style="left:50%;top:50%;margin-left:-3px;margin-top:-3.5px" width="6" height="7" viewBox="0 0 6 7"><path d="M5 0v7L1 3.500z" fill="#000"/></svg></div>
<div class="a btn" style="left:74px;top:684px;width:145px;height:16px;"></div>
<div class="a btn" style="left:274px;top:684px;width:17px;height:16px;"><svg style="left:50%;top:50%;margin-left:-3px;margin-top:-3.5px" width="6" height="7" viewBox="0 0 6 7"><path d="M1 0v7l4-3.500z" fill="#000"/></svg></div>
<div class="a " style="left:57px;top:701px;width:51px;height:20px;background:#fff"></div>
<div class="a " style="left:108px;top:701px;width:129px;height:20px;background:#4d6082"></div>
<svg style="left:61px;top:703px" width="18" height="16" viewBox="0 0 18 16"><defs><linearGradient id="gy" x1="0" y1="0" x2="0" y2="1"><stop offset="0" stop-color="#ffe680"/><stop offset="1" stop-color="#f0a818"/></linearGradient><linearGradient id="gb" x1="0" y1="0" x2="1" y2="1"><stop offset="0" stop-color="#8f8ff0"/><stop offset="1" stop-color="#3030a8"/></linearGradient><linearGradient id="gw" x1="0" y1="0" x2="0" y2="1"><stop offset="0" stop-color="#ffffff"/><stop offset="1" stop-color="#c4d8f4"/></linearGradient></defs><g transform="translate(4,0)"><rect x="0.500" y="0.500" width="13" height="13" fill="url(#gw)" stroke="#4878d0"/><rect x="0" y="0" width="14" height="3" fill="#5a96ec"/><path d="M1 1h12" stroke="#b8d4fa"/></g><g transform="translate(0,6)"><path d="M0 3l2-3h11 v7 l-2 3H0z" fill="#3c3c3c"/><path d="M0 3h11 v7 H0z" fill="#1c1c1c"/><path d="M2 5h8 M2 7.500h8 M3.66667 3.500v5 M7.33333 3.500v5" stroke="#6a6a6a" stroke-width="0.700"/><rect x="4" y="4" width="1.600" height="1.200" fill="#20b060"/><rect x="7" y="4" width="1.600" height="1.200" fill="#e03030"/></g></svg>
<div class="a t " style="left:81px;top:704px;height:16px;line-height:16px;">项目</div>
<svg style="left:113px;top:703px" width="16" height="16" viewBox="0 0 16 16"><g transform="translate(1,1)"><path d="M6 3.5h3M8.5 3.5v5h2" stroke="#444" fill="none"/><rect x="0.5" y="0.5" width="5" height="5" fill="#fff" stroke="#0000c8" stroke-width="1.2"/><rect x="9.5" y="0.5" width="4" height="4" fill="#fff" stroke="#00a000" stroke-width="1.2"/><rect x="10.5" y="6.5" width="4" height="4" fill="#fff" stroke="#00a000" stroke-width="1.2"/></g><path d="M1 12h10M7 8.500l4 3.500-4 3.500" stroke="#fff" stroke-width="4.200" fill="none"/><path d="M1 12h10M7 8.500l4 3.500-4 3.500" stroke="#3c3c3c" stroke-width="2.200" fill="none"/></svg>
<div class="a t " style="left:132px;top:704px;height:16px;line-height:16px;color:#fff">调用树</div>
<svg style="left:177px;top:703px" width="16" height="16" viewBox="0 0 16 16"><g transform="translate(1,1)"><path d="M6 3.5h3M8.5 3.5v5h2" stroke="#444" fill="none"/><rect x="0.5" y="0.5" width="5" height="5" fill="#fff" stroke="#0000c8" stroke-width="1.2"/><rect x="9.5" y="0.5" width="4" height="4" fill="#fff" stroke="#00a000" stroke-width="1.2"/><rect x="10.5" y="6.5" width="4" height="4" fill="#fff" stroke="#00a000" stroke-width="1.2"/></g><path d="M3 12h10M7 8.500l-4 3.500 4 3.500" stroke="#fff" stroke-width="4.200" fill="none"/><path d="M3 12h10M7 8.500l-4 3.500 4 3.500" stroke="#3c3c3c" stroke-width="2.200" fill="none"/></svg>
<div class="a t " style="left:196px;top:704px;height:16px;line-height:16px;color:#fff">已使用</div>
<div class="a t " style="left:63px;top:730px;height:16px;line-height:16px;color:#fff"><span class="l">Compile/check</span></div>
<div class="a " style="left:57px;top:750px;width:96px;height:6px;background:#4d6082"></div>
<div class="a " style="left:52px;top:756px;width:1366px;height:20px;background:#68217a"></div>
<div class="a " style="left:52px;top:776px;width:1366px;height:2px;background:#fbfbf4"></div>
<div class="a " style="left:52px;top:778px;width:1366px;height:2px;background:#dcdccf"></div>
<div class="a t " style="left:54px;top:760px;height:16px;line-height:16px;color:#fff">就绪</div>
<div class="a t " style="left:598px;top:760px;height:16px;line-height:16px;color:#fff">线<span class="l">: 10, </span>字符<span class="l">: 18</span></div>
<div class="a t " style="left:717px;top:760px;height:16px;line-height:16px;color:#fff">插入</div>
<div class="a t " style="left:1018px;top:760px;height:16px;line-height:16px;color:#fff"><span class="l">C-NET(RS232C): COM3, 115200, 8 O</span></div>
<div class="a t " style="left:1220px;top:760px;height:16px;line-height:16px;color:#fff">没有指定<span class="l">MEWNET/C-NET</span>网络</div>
<div class="a " style="left:296px;top:132px;width:838px;height:590px;background:#31466b"></div>
<div class="a " style="left:297px;top:135px;width:836px;height:20px;background:#2c3d5c"></div>
<div class="a " style="left:298px;top:135px;width:131px;height:20px;background:#364e6f"></div>
<div class="a " style="left:429px;top:135px;width:92px;height:21px;background:#fff29d"></div>
<svg style="left:304px;top:140px" width="16" height="12" viewBox="0 0 16 12"><g transform="translate(0,0)"><path d="M6 3.5h3M8.5 3.5v5h2" stroke="#444" fill="none"/><rect x="0.5" y="0.5" width="5" height="5" fill="#fff" stroke="#0000c8" stroke-width="1.2"/><rect x="9.5" y="0.5" width="4" height="4" fill="#fff" stroke="#00a000" stroke-width="1.2"/><rect x="10.5" y="6.5" width="4" height="4" fill="#fff" stroke="#00a000" stroke-width="1.2"/></g></svg>
<div class="a t " style="left:321px;top:138px;height:16px;line-height:16px;color:#fff"><span class="l">POU</span></div>
<svg style="left:366px;top:137px" width="16" height="16" viewBox="0 0 16 16"><circle cx="7" cy="7" r="4.500" fill="none" stroke="#8e98e6" stroke-width="4.400" stroke-dasharray="2.400 1.200"/><circle cx="7" cy="7" r="3.700" fill="none" stroke="#8e98e6" stroke-width="3"/><path d="M8 7l7 4-7 4z" fill="#20a030" stroke="#106018" stroke-width="0.600"/></svg>
<div class="a t " style="left:385px;top:138px;height:16px;line-height:16px;color:#fff">程序</div>
<svg style="left:434px;top:138px" width="16" height="16" viewBox="0 0 16 16"><path d="M1 5h4M1 10h4M10 5h4M10 10h4" stroke="#333" stroke-width="1.400"/><rect x="5" y="1.500" width="5.500" height="12.500" fill="#fff" stroke="#2020c0" stroke-width="1.200"/></svg>
<div class="a t " style="left:452px;top:138px;height:16px;line-height:16px;color:#5e5430">电机启动</div>
<svg style="left:507px;top:140px" width="10" height="10" viewBox="0 0 10 10"><path d="M1 1l8 8M9 1L1 9" stroke="#6b6038" stroke-width="1.400"/></svg>
<svg style="left:1106px;top:141px" width="10" height="5" viewBox="0 0 10 5"><path d="M0 0h10L5 5z" fill="#fff"/></svg>
<svg style="left:1120px;top:137px" width="11" height="11" viewBox="0 0 11 11"><path d="M1 1l9 9M10 1L1 10" stroke="#fff" stroke-width="2.200"/></svg>
<div class="a " style="left:297px;top:155px;width:836px;height:565px;background:#cfd6e5"></div>
<div class="a " style="left:297px;top:155px;width:836px;height:1px;background:#fff29d"></div>
<div class="a " style="left:299px;top:158px;width:816px;height:218px;background:#fff"></div>
<div class="a " style="left:299px;top:158px;width:816px;height:17px;background:#d4d0c8;border-top:1px solid #fff;border-bottom:1px solid #808080"></div>
<div class="a " style="left:338px;top:161px;width:1px;height:11px;background:#808080"></div>
<div class="a " style="left:339px;top:161px;width:1px;height:11px;background:#fff"></div>
<div class="a t " style="left:345px;top:160px;height:16px;line-height:16px;">类别</div>
<div class="a " style="left:433px;top:161px;width:1px;height:11px;background:#808080"></div>
<div class="a " style="left:434px;top:161px;width:1px;height:11px;background:#fff"></div>
<div class="a t " style="left:440px;top:160px;height:16px;line-height:16px;">标识符</div>
<div class="a " style="left:683px;top:161px;width:1px;height:11px;background:#808080"></div>
<div class="a " style="left:684px;top:161px;width:1px;height:11px;background:#fff"></div>
<div class="a t " style="left:690px;top:160px;height:16px;line-height:16px;">类型</div>
<div class="a " style="left:808px;top:161px;width:1px;height:11px;background:#808080"></div>
<div class="a " style="left:809px;top:161px;width:1px;height:11px;background:#fff"></div>
<div class="a t " style="left:815px;top:160px;height:16px;line-height:16px;">初始值</div>
<div class="a " style="left:882px;top:161px;width:1px;height:11px;background:#808080"></div>
<div class="a " style="left:883px;top:161px;width:1px;height:11px;background:#fff"></div>
<div class="a t " style="left:889px;top:160px;height:16px;line-height:16px;">注释</div>
<div class="a " style="left:299px;top:176px;width:816px;height:16px;background:#fff;border-bottom:1px solid #d8d5cb"></div>
<div class="a " style="left:303px;top:176px;width:36px;height:15px;background:#fdc795"></div>
<div class="a t " style="left:305px;top:176px;height:16px;line-height:16px;"><span class="l">0</span></div>
<div class="a " style="left:339px;top:176px;width:1px;height:16px;background:#d8d5cb"></div>
<div class="a t " style="left:345px;top:176px;height:16px;line-height:16px;"><span class="l">VAR_INPUT</span></div>
<div class="a " style="left:434px;top:176px;width:1px;height:16px;background:#d8d5cb"></div>
<div class="a t " style="left:440px;top:176px;height:16px;line-height:16px;"><span class="l">Start_1</span></div>
<div class="a " style="left:684px;top:176px;width:1px;height:16px;background:#d8d5cb"></div>
<div class="a t " style="left:690px;top:176px;height:16px;line-height:16px;"><span class="l">BOOL</span></div>
<div class="a " style="left:809px;top:176px;width:1px;height:16px;background:#d8d5cb"></div>
<div class="a t " style="left:815px;top:176px;height:16px;line-height:16px;"><span class="l">FALSE</span></div>
<div class="a " style="left:884px;top:176px;width:1px;height:16px;background:#d8d5cb"></div>
<div class="a " style="left:299px;top:192px;width:816px;height:16px;background:#f2f2f2;border-bottom:1px solid #d8d5cb"></div>
<div class="a " style="left:303px;top:192px;width:36px;height:15px;background:#fdc795"></div>
<div class="a t " style="left:305px;top:192px;height:16px;line-height:16px;"><span class="l">1</span></div>
<div class="a " style="left:339px;top:192px;width:1px;height:16px;background:#d8d5cb"></div>
<div class="a t " style="left:345px;top:192px;height:16px;line-height:16px;"><span class="l">VAR_INPUT</span></div>
<div class="a " style="left:434px;top:192px;width:1px;height:16px;background:#d8d5cb"></div>
<div class="a t " style="left:440px;top:192px;height:16px;line-height:16px;"><span class="l">Stop_1</span></div>
<div class="a " style="left:684px;top:192px;width:1px;height:16px;background:#d8d5cb"></div>
<div class="a t " style="left:690px;top:192px;height:16px;line-height:16px;"><span class="l">BOOL</span></div>
<div class="a " style="left:809px;top:192px;width:1px;height:16px;background:#d8d5cb"></div>
<div class="a t " style="left:815px;top:192px;height:16px;line-height:16px;"><span class="l">FALSE</span></div>
<div class="a " style="left:884px;top:192px;width:1px;height:16px;background:#d8d5cb"></div>
<div class="a " style="left:299px;top:208px;width:816px;height:16px;background:#fff;border-bottom:1px solid #d8d5cb"></div>
<div class="a " style="left:303px;top:208px;width:36px;height:15px;background:#fdc795"></div>
<div class="a t " style="left:305px;top:208px;height:16px;line-height:16px;"><span class="l">2</span></div>
<div class="a " style="left:339px;top:208px;width:1px;height:16px;background:#d8d5cb"></div>
<div class="a t " style="left:345px;top:208px;height:16px;line-height:16px;"><span class="l">VAR_INPUT</span></div>
<div class="a " style="left:434px;top:208px;width:1px;height:16px;background:#d8d5cb"></div>
<div class="a t " style="left:440px;top:208px;height:16px;line-height:16px;"><span class="l">Fault_1</span></div>
<div class="a " style="left:684px;top:208px;width:1px;height:16px;background:#d8d5cb"></div>
<div class="a t " style="left:690px;top:208px;height:16px;line-height:16px;"><span class="l">BOOL</span></div>
<div class="a " style="left:809px;top:208px;width:1px;height:16px;background:#d8d5cb"></div>
<div class="a t " style="left:815px;top:208px;height:16px;line-height:16px;"><span class="l">FALSE</span></div>
<div class="a " style="left:884px;top:208px;width:1px;height:16px;background:#d8d5cb"></div>
<div class="a " style="left:299px;top:224px;width:816px;height:16px;background:#f2f2f2;border-bottom:1px solid #d8d5cb"></div>
<div class="a " style="left:303px;top:224px;width:36px;height:15px;background:#fdc795"></div>
<div class="a t " style="left:305px;top:224px;height:16px;line-height:16px;"><span class="l">3</span></div>
<div class="a " style="left:339px;top:224px;width:1px;height:16px;background:#d8d5cb"></div>
<div class="a t " style="left:345px;top:224px;height:16px;line-height:16px;"><span class="l">VAR_INPUT</span></div>
<div class="a " style="left:434px;top:224px;width:1px;height:16px;background:#d8d5cb"></div>
<div class="a t " style="left:440px;top:224px;height:16px;line-height:16px;"><span class="l">Rest_1</span></div>
<div class="a " style="left:684px;top:224px;width:1px;height:16px;background:#d8d5cb"></div>
<div class="a t " style="left:690px;top:224px;height:16px;line-height:16px;"><span class="l">BOOL</span></div>
<div class="a " style="left:809px;top:224px;width:1px;height:16px;background:#d8d5cb"></div>
<div class="a t " style="left:815px;top:224px;height:16px;line-height:16px;"><span class="l">FALSE</span></div>
<div class="a " style="left:884px;top:224px;width:1px;height:16px;background:#d8d5cb"></div>
<div class="a " style="left:299px;top:240px;width:816px;height:16px;background:#fff;border-bottom:1px solid #d8d5cb"></div>
<div class="a " style="left:303px;top:240px;width:36px;height:15px;background:#fdc795"></div>
<div class="a t " style="left:305px;top:240px;height:16px;line-height:16px;"><span class="l">4</span></div>
<div class="a " style="left:339px;top:240px;width:1px;height:16px;background:#d8d5cb"></div>
<div class="a t " style="left:345px;top:240px;height:16px;line-height:16px;"><span class="l">VAR_OUTPUT</span></div>
<div class="a " style="left:434px;top:240px;width:1px;height:16px;background:#d8d5cb"></div>
<div class="a t " style="left:440px;top:240px;height:16px;line-height:16px;"><span class="l">Motor_1</span></div>
<div class="a " style="left:684px;top:240px;width:1px;height:16px;background:#d8d5cb"></div>
<div class="a t " style="left:690px;top:240px;height:16px;line-height:16px;"><span class="l">BOOL</span></div>
<div class="a " style="left:809px;top:240px;width:1px;height:16px;background:#d8d5cb"></div>
<div class="a t " style="left:815px;top:240px;height:16px;line-height:16px;"><span class="l">FALSE</span></div>
<div class="a " style="left:884px;top:240px;width:1px;height:16px;background:#d8d5cb"></div>
<div class="a " style="left:299px;top:256px;width:816px;height:16px;background:#d9d9d9;border-bottom:1px solid #d8d5cb"></div>
<div class="a " style="left:303px;top:256px;width:36px;height:15px;background:#e9a770"></div>
<div class="a t " style="left:305px;top:256px;height:16px;line-height:16px;"><span class="l">5</span></div>
<div class="a " style="left:339px;top:256px;width:1px;height:16px;background:#d8d5cb"></div>
<div class="a t " style="left:345px;top:256px;height:16px;line-height:16px;"><span class="l">VAR_OUTPUT</span></div>
<div class="a " style="left:434px;top:256px;width:1px;height:16px;background:#d8d5cb"></div>
<div class="a t " style="left:440px;top:256px;height:16px;line-height:16px;"><span class="l">Alam_1</span></div>
<div class="a " style="left:684px;top:256px;width:1px;height:16px;background:#d8d5cb"></div>
<div class="a t " style="left:690px;top:256px;height:16px;line-height:16px;"><span class="l">BOOL</span></div>
<div class="a " style="left:809px;top:256px;width:1px;height:16px;background:#d8d5cb"></div>
<div class="a t " style="left:815px;top:256px;height:16px;line-height:16px;"><span class="l">FALSE</span></div>
<div class="a " style="left:884px;top:256px;width:1px;height:16px;background:#d8d5cb"></div>
<div class="a " style="left:299px;top:272px;width:816px;height:16px;background:#fff;border-bottom:1px solid #d8d5cb"></div>
<div class="a " style="left:303px;top:272px;width:36px;height:15px;background:#fdc795"></div>
<div class="a t " style="left:305px;top:272px;height:16px;line-height:16px;"><span class="l">6</span></div>
<div class="a " style="left:339px;top:272px;width:1px;height:16px;background:#d8d5cb"></div>
<div class="a t " style="left:345px;top:272px;height:16px;line-height:16px;"><span class="l">VAR</span></div>
<div class="a " style="left:434px;top:272px;width:1px;height:16px;background:#d8d5cb"></div>
<div class="a " style="left:684px;top:272px;width:1px;height:16px;background:#d8d5cb"></div>
<div class="a " style="left:809px;top:272px;width:1px;height:16px;background:#d8d5cb"></div>
<div class="a " style="left:884px;top:272px;width:1px;height:16px;background:#d8d5cb"></div>
<div class="a " style="left:434px;top:255px;width:251px;height:17px;border:1px solid #000"></div>
<div class="a dot" style="left:1115px;top:158px;width:16px;height:218px;"></div>
<div class="a " style="left:1116px;top:159px;width:14px;height:4px;background:#cfd6e5;border:1px solid #b4bfd6"></div>
<div class="a btn" style="left:1115px;top:164px;width:16px;height:15px;"><svg style="left:50%;top:50%;margin-left:-3.5px;margin-top:-3px" width="7" height="6" viewBox="0 0 7 6"><path d="M0 5h7L3.500 1z" fill="#808080"/></svg></div>
<div class="a btn" style="left:1115px;top:360px;width:16px;height:16px;"><svg style="left:50%;top:50%;margin-left:-3.5px;margin-top:-3px" width="7" height="6" viewBox="0 0 7 6"><path d="M0 1h7L3.500 5z" fill="#808080"/></svg></div>
<div class="a dot" style="left:299px;top:376px;width:816px;height:16px;"></div>
<div class="a btn" style="left:299px;top:376px;width:16px;height:16px;"><svg style="left:50%;top:50%;margin-left:-3px;margin-top:-3.5px" width="6" height="7" viewBox="0 0 6 7"><path d="M5 0v7L1 3.500z" fill="#000"/></svg></div>
<div class="a btn" style="left:315px;top:376px;width:765px;height:16px;"></div>
<div class="a btn" style="left:1099px;top:376px;width:16px;height:16px;"><svg style="left:50%;top:50%;margin-left:-3px;margin-top:-3.5px" width="6" height="7" viewBox="0 0 6 7"><path d="M1 0v7l4-3.500z" fill="#000"/></svg></div>
<div class="a " style="left:1115px;top:376px;width:16px;height:16px;background:#d4d0c8"><svg style="left:0;top:0" width="16" height="16" viewBox="0 0 16 16"><path d="M4 15L15 4M8 15l7-7M12 15l3-3" stroke="#808080" stroke-width="1.200"/><path d="M5 15L15 5M9 15l6-6M13 15l2-2" stroke="#fff" stroke-width="1"/></svg></div>
<div class="a " style="left:299px;top:398px;width:816px;height:304px;background:#fff"></div>
<div class="a dot" style="left:1115px;top:398px;width:16px;height:304px;"></div>
<div class="a " style="left:1116px;top:399px;width:14px;height:4px;background:#cfd6e5;border:1px solid #b4bfd6"></div>
<div class="a btn" style="left:1115px;top:404px;width:16px;height:15px;"><svg style="left:50%;top:50%;margin-left:-3.5px;margin-top:-3px" width="7" height="6" viewBox="0 0 7 6"><path d="M0 5h7L3.500 1z" fill="#808080"/></svg></div>
<div class="a btn" style="left:1115px;top:686px;width:16px;height:16px;"><svg style="left:50%;top:50%;margin-left:-3.5px;margin-top:-3px" width="7" height="6" viewBox="0 0 7 6"><path d="M0 1h7L3.500 5z" fill="#808080"/></svg></div>
<div class="a dot" style="left:299px;top:702px;width:816px;height:16px;"></div>
<div class="a btn" style="left:299px;top:702px;width:16px;height:16px;"><svg style="left:50%;top:50%;margin-left:-3px;margin-top:-3.5px" width="6" height="7" viewBox="0 0 6 7"><path d="M5 0v7L1 3.500z" fill="#808080"/></svg></div>
<div class="a btn" style="left:1099px;top:702px;width:16px;height:16px;"><svg style="left:50%;top:50%;margin-left:-3px;margin-top:-3.5px" width="6" height="7" viewBox="0 0 6 7"><path d="M1 0v7l4-3.500z" fill="#808080"/></svg></div>
<div class="a " style="left:1115px;top:702px;width:16px;height:16px;background:#d4d0c8"><svg style="left:0;top:0" width="16" height="16" viewBox="0 0 16 16"><path d="M4 15L15 4M8 15l7-7M12 15l3-3" stroke="#808080" stroke-width="1.200"/><path d="M5 15L15 5M9 15l6-6M13 15l2-2" stroke="#fff" stroke-width="1"/></svg></div>
<div class="a code" style="left:299.5px;top:399px;height:16px;line-height:16px"><span class="k">IF</span> Start_1 <span class="k">AND NOT</span> Stop_1 <span class="k">AND NOT</span> Fault_1 <span class="k">THEN</span></div>
<div class="a code" style="left:299.5px;top:415px;height:16px;line-height:16px">    Motor_1<span class="p">:=</span><span class="r">true</span><span class="p">;</span></div>
<div class="a code" style="left:299.5px;top:431px;height:16px;line-height:16px"><span class="k">END_IF</span> <span class="p">;</span></div>
<div class="a code" style="left:299.5px;top:447px;height:16px;line-height:16px"><span class="k">IF</span> Stop_1 <span class="k">THEN</span></div>
<div class="a code" style="left:299.5px;top:463px;height:16px;line-height:16px">    Motor_1<span class="p">:=</span><span class="r">false</span><span class="p">;</span></div>
<div class="a code" style="left:299.5px;top:479px;height:16px;line-height:16px"><span class="k">END_IF</span> <span class="p">;</span></div>
<div class="a code" style="left:299.5px;top:495px;height:16px;line-height:16px"><span class="k">IF</span> Fault_1 <span class="k">THEN</span></div>
<div class="a code" style="left:299.5px;top:511px;height:16px;line-height:16px">    Motor_1<span class="p">:=</span><span class="r">false</span><span class="p">;</span></div>
<div class="a code" style="left:299.5px;top:527px;height:16px;line-height:16px">    Alam_1<span class="p">:=</span><span class="r">true</span><span class="p">;</span></div>
<div class="a code" style="left:299.5px;top:543px;height:16px;line-height:16px"><span class="k">ELSIF</span> Rest_1  <span class="k">THEN</span></div>
<div class="a code" style="left:299.5px;top:559px;height:16px;line-height:16px">    Alam_1<span class="p">:=</span><span class="r">false</span><span class="p">;</span></div>
<div class="a code" style="left:299.5px;top:575px;height:16px;line-height:16px"><span class="k">END_IF</span><span class="p">;</span></div>
<div class="a " style="left:443px;top:543px;width:1px;height:14px;background:#000"></div>
<div class="a " style="left:1140px;top:132px;width:273px;height:18px;background:#4d6082;border:1px solid #6b7ea3;border-bottom:none"></div>
<div class="a t " style="left:1145px;top:134px;height:16px;line-height:16px;color:#fff">指令列表</div>
<svg style="left:1363px;top:139px" width="10" height="5" viewBox="0 0 10 5"><path d="M0 0h10L5 5z" fill="#fff"/></svg>
<svg style="left:1379px;top:135px" width="10" height="12" viewBox="0 0 10 12" fill="none" stroke="#fff"><path d="M2.500 0.500h5M2.500 0v7" stroke-width="1.100"/><path d="M7 0v7" stroke-width="2"/><path d="M0 7.700h10" stroke-width="1.800"/><path d="M5 8v4" stroke-width="1.500"/></svg>
<svg style="left:1395px;top:136px" width="10" height="10" viewBox="0 0 10 10"><path d="M1 1l8 8M9 1L1 9" stroke="#fff" stroke-width="2"/></svg>
<div class="a " style="left:1140px;top:150px;width:273px;height:25px;background:#cfd6e5"></div>
<div class="a " style="left:1140px;top:175px;width:273px;height:489px;background:#fff"></div>
<svg style="left:1145px;top:155px" width="16" height="16" viewBox="0 0 16 16"><rect x="0.500" y="0.500" width="6" height="6" rx="1" fill="#fff" stroke="#3a8ae0"/><rect x="0.500" y="8.500" width="6" height="6" rx="1" fill="#fff" stroke="#3a8ae0"/><path d="M2 3.500h3M3.500 2v3M2 11.500h3M3.500 10v3" stroke="#000" stroke-width="1.200"/><path d="M8 2.500h7M8 5.500h7M8 8.500h7M8 11.500h7M8 14.500h7" stroke="#888" stroke-dasharray="2 1"/></svg>
<div class="a t " style="left:1163px;top:155px;height:16px;line-height:16px;color:#444">分类</div>
<svg style="left:1194px;top:162px" width="5" height="3" viewBox="0 0 5 3"><path d="M0 0h5L2.500 3z" fill="#333"/></svg>
<div class="a " style="left:1204px;top:153px;width:1px;height:20px;background:#8e9bbc"></div>
<svg style="left:1211px;top:155px" width="17" height="18" viewBox="0 0 17 18"><defs><linearGradient id="gf" x1="0" y1="0" x2="1" y2="1"><stop offset="0" stop-color="#8cc8ff"/><stop offset="1" stop-color="#1c5cd0"/></linearGradient></defs><path d="M0.500 0.500h11L7 5.500v7l-2.500-1.500V5.500z" fill="url(#gf)" stroke="#2464c8" stroke-width="0.800"/><path d="M5 10l5-4 5.500 3-5.500 5z" fill="#6a74f0" stroke="#3a40b8" stroke-width="0.800"/><path d="M5 10v1.500l5.500 4 5-5V9l-5 5z" fill="#f0f0ff" stroke="#3a40b8" stroke-width="0.700"/></svg>
<svg style="left:1232px;top:162px" width="5" height="3" viewBox="0 0 5 3"><path d="M0 0h5L2.500 3z" fill="#333"/></svg>
<svg style="left:1240px;top:155px" width="16" height="18" viewBox="0 0 16 18"><defs><linearGradient id="gf" x1="0" y1="0" x2="1" y2="1"><stop offset="0" stop-color="#8cc8ff"/><stop offset="1" stop-color="#1c5cd0"/></linearGradient></defs><path d="M0.500 0.500h11L7 5.500v7l-2.500-1.500V5.500z" fill="url(#gf)" stroke="#2464c8" stroke-width="0.800"/><rect x="7.500" y="10.500" width="5" height="5" rx="1" fill="#fff" stroke="#3a8ae0"/><path d="M9 13h2M10 12v2" stroke="#000"/><path d="M14 11.500h2M14 14.500h2" stroke="#888"/></svg>
<svg style="left:1261px;top:162px" width="5" height="3" viewBox="0 0 5 3"><path d="M0 0h5L2.500 3z" fill="#333"/></svg>
<svg style="left:1269px;top:155px" width="16" height="18" viewBox="0 0 16 18"><defs><linearGradient id="gf" x1="0" y1="0" x2="1" y2="1"><stop offset="0" stop-color="#8cc8ff"/><stop offset="1" stop-color="#1c5cd0"/></linearGradient></defs><path d="M2.500 0.500h11L9 5.500v7l-2.500-1.500V5.500z" fill="url(#gf)" stroke="#2464c8" stroke-width="0.800"/><rect x="2.500" y="9.500" width="3" height="6" fill="#fff" stroke="#1010c0" stroke-width="1.200"/><rect x="11" y="6.500" width="3" height="6" fill="#fff" stroke="#30c000" stroke-width="1.200"/><path d="M0 13h2M6 13h2M9 9.500h2M14.500 9.500h2" stroke="#333"/></svg>
<svg style="left:1290px;top:162px" width="5" height="3" viewBox="0 0 5 3"><path d="M0 0h5L2.500 3z" fill="#333"/></svg>
<svg style="left:1298px;top:155px" width="16" height="18" viewBox="0 0 16 18"><path d="M0.500 1h11L7 6v7l-2.500-1.500V6z" fill="#d8d8d8" stroke="#a8a8a8" stroke-width="0.800"/><path d="M9 9l6 6M15 9l-6 6" stroke="#a8a8a8" stroke-width="1.600"/></svg>
<div class="a t " style="left:1140px;top:176px;height:16px;line-height:16px;">过滤设置<span class="l">: &lt;</span>全部<span class="l">&gt; / &lt;</span>全部<span class="l">&gt; / &lt;</span>全部<span class="l">&gt;</span></div>
<div class="a " style="left:1140px;top:192px;width:272px;height:20px;background:#fff;border:1px solid #8e9bbc"></div>
<svg style="left:1401px;top:200px" width="5" height="3" viewBox="0 0 5 3"><path d="M0 0h5L2.500 3z" fill="#333"/></svg>
<svg style="left:1148px;top:218px" width="9" height="9" viewBox="0 0 9 9"><rect x="0.500" y="0.500" width="8" height="8" fill="#fff" stroke="#000"/><path d="M2 4.500h5M4.500 2v5" stroke="#000"/></svg>
<svg style="left:1166px;top:214px" width="18" height="16" viewBox="0 0 18 16"><defs><linearGradient id="gfo" x1="0" y1="0" x2="1" y2="0"><stop offset="0" stop-color="#f3d688"/><stop offset="0.550" stop-color="#f6e0a0"/><stop offset="1" stop-color="#fbf0d0"/></linearGradient></defs><path d="M0 0h7.500l1.500 2v11.500l-6 2.500-3-1z" fill="url(#gfo)"/><path d="M10 9h2M11.500 9v4h1" stroke="#444" fill="none"/><rect x="6.500" y="7" width="3.500" height="3.500" fill="#fff" stroke="#0000c8" stroke-width="1.200"/><rect x="12.500" y="6.500" width="3" height="3" fill="#fff" stroke="#00a000" stroke-width="1.200"/><rect x="13" y="11.500" width="3" height="3" fill="#fff" stroke="#00a000" stroke-width="1.200"/></svg>
<div class="a t " style="left:1192px;top:214px;height:16px;line-height:16px;"><span class="l">GT</span>面板说明</div>
<svg style="left:1148px;top:234px" width="9" height="9" viewBox="0 0 9 9"><rect x="0.500" y="0.500" width="8" height="8" fill="#fff" stroke="#000"/><path d="M2 4.500h5M4.500 2v5" stroke="#000"/></svg>
<svg style="left:1166px;top:230px" width="18" height="16" viewBox="0 0 18 16"><defs><linearGradient id="gfo" x1="0" y1="0" x2="1" y2="0"><stop offset="0" stop-color="#f3d688"/><stop offset="0.550" stop-color="#f6e0a0"/><stop offset="1" stop-color="#fbf0d0"/></linearGradient></defs><path d="M0 0h7.500l1.500 2v11.500l-6 2.500-3-1z" fill="url(#gfo)"/><path d="M10 9h2M11.500 9v4h1" stroke="#444" fill="none"/><rect x="6.500" y="7" width="3.500" height="3.500" fill="#fff" stroke="#0000c8" stroke-width="1.200"/><rect x="12.500" y="6.500" width="3" height="3" fill="#fff" stroke="#00a000" stroke-width="1.200"/><rect x="13" y="11.500" width="3" height="3" fill="#fff" stroke="#00a000" stroke-width="1.200"/></svg>
<div class="a t " style="left:1192px;top:230px;height:16px;line-height:16px;"><span class="l">Modbus/MEWTOCOL</span>的通信指令</div>
<svg style="left:1148px;top:250px" width="9" height="9" viewBox="0 0 9 9"><rect x="0.500" y="0.500" width="8" height="8" fill="#fff" stroke="#000"/><path d="M2 4.500h5M4.500 2v5" stroke="#000"/></svg>
<svg style="left:1166px;top:246px" width="18" height="16" viewBox="0 0 18 16"><defs><linearGradient id="gfo" x1="0" y1="0" x2="1" y2="0"><stop offset="0" stop-color="#f3d688"/><stop offset="0.550" stop-color="#f6e0a0"/><stop offset="1" stop-color="#fbf0d0"/></linearGradient></defs><path d="M0 0h7.500l1.500 2v11.500l-6 2.500-3-1z" fill="url(#gfo)"/><path d="M10 9h2M11.500 9v4h1" stroke="#444" fill="none"/><rect x="6.500" y="7" width="3.500" height="3.500" fill="#fff" stroke="#0000c8" stroke-width="1.200"/><rect x="12.500" y="6.500" width="3" height="3" fill="#fff" stroke="#00a000" stroke-width="1.200"/><rect x="13" y="11.500" width="3" height="3" fill="#fff" stroke="#00a000" stroke-width="1.200"/></svg>
<div class="a t " style="left:1192px;top:246px;height:16px;line-height:16px;"><span class="l">PLC</span>信息指令</div>
<svg style="left:1148px;top:266px" width="9" height="9" viewBox="0 0 9 9"><rect x="0.500" y="0.500" width="8" height="8" fill="#fff" stroke="#000"/><path d="M2 4.500h5M4.500 2v5" stroke="#000"/></svg>
<svg style="left:1166px;top:262px" width="18" height="16" viewBox="0 0 18 16"><defs><linearGradient id="gfo" x1="0" y1="0" x2="1" y2="0"><stop offset="0" stop-color="#f3d688"/><stop offset="0.550" stop-color="#f6e0a0"/><stop offset="1" stop-color="#fbf0d0"/></linearGradient></defs><path d="M0 0h7.500l1.500 2v11.500l-6 2.500-3-1z" fill="url(#gfo)"/><path d="M10 9h2M11.500 9v4h1" stroke="#444" fill="none"/><rect x="6.500" y="7" width="3.500" height="3.500" fill="#fff" stroke="#0000c8" stroke-width="1.200"/><rect x="12.500" y="6.500" width="3" height="3" fill="#fff" stroke="#00a000" stroke-width="1.200"/><rect x="13" y="11.500" width="3" height="3" fill="#fff" stroke="#00a000" stroke-width="1.200"/></svg>
<div class="a t " style="left:1192px;top:262px;height:16px;line-height:16px;"><span class="l">SFC</span>控制指令</div>
<svg style="left:1148px;top:282px" width="9" height="9" viewBox="0 0 9 9"><rect x="0.500" y="0.500" width="8" height="8" fill="#fff" stroke="#000"/><path d="M2 4.500h5M4.500 2v5" stroke="#000"/></svg>
<svg style="left:1166px;top:278px" width="18" height="16" viewBox="0 0 18 16"><defs><linearGradient id="gfo" x1="0" y1="0" x2="1" y2="0"><stop offset="0" stop-color="#f3d688"/><stop offset="0.550" stop-color="#f6e0a0"/><stop offset="1" stop-color="#fbf0d0"/></linearGradient></defs><path d="M0 0h7.500l1.500 2v11.500l-6 2.500-3-1z" fill="url(#gfo)"/><path d="M10 9h2M11.500 9v4h1" stroke="#444" fill="none"/><rect x="6.500" y="7" width="3.500" height="3.500" fill="#fff" stroke="#0000c8" stroke-width="1.200"/><rect x="12.500" y="6.500" width="3" height="3" fill="#fff" stroke="#00a000" stroke-width="1.200"/><rect x="13" y="11.500" width="3" height="3" fill="#fff" stroke="#00a000" stroke-width="1.200"/></svg>
<div class="a t " style="left:1192px;top:278px;height:16px;line-height:16px;">位运算指令</div>
<svg style="left:1148px;top:298px" width="9" height="9" viewBox="0 0 9 9"><rect x="0.500" y="0.500" width="8" height="8" fill="#fff" stroke="#000"/><path d="M2 4.500h5M4.500 2v5" stroke="#000"/></svg>
<svg style="left:1166px;top:294px" width="18" height="16" viewBox="0 0 18 16"><defs><linearGradient id="gfo" x1="0" y1="0" x2="1" y2="0"><stop offset="0" stop-color="#f3d688"/><stop offset="0.550" stop-color="#f6e0a0"/><stop offset="1" stop-color="#fbf0d0"/></linearGradient></defs><path d="M0 0h7.500l1.500 2v11.500l-6 2.500-3-1z" fill="url(#gfo)"/><path d="M10 9h2M11.500 9v4h1" stroke="#444" fill="none"/><rect x="6.500" y="7" width="3.500" height="3.500" fill="#fff" stroke="#0000c8" stroke-width="1.200"/><rect x="12.500" y="6.500" width="3" height="3" fill="#fff" stroke="#00a000" stroke-width="1.200"/><rect x="13" y="11.500" width="3" height="3" fill="#fff" stroke="#00a000" stroke-width="1.200"/></svg>
<div class="a t " style="left:1192px;top:294px;height:16px;line-height:16px;">信号处理指令</div>
<svg style="left:1148px;top:314px" width="9" height="9" viewBox="0 0 9 9"><rect x="0.500" y="0.500" width="8" height="8" fill="#fff" stroke="#000"/><path d="M2 4.500h5M4.500 2v5" stroke="#000"/></svg>
<svg style="left:1166px;top:310px" width="18" height="16" viewBox="0 0 18 16"><defs><linearGradient id="gfo" x1="0" y1="0" x2="1" y2="0"><stop offset="0" stop-color="#f3d688"/><stop offset="0.550" stop-color="#f6e0a0"/><stop offset="1" stop-color="#fbf0d0"/></linearGradient></defs><path d="M0 0h7.500l1.500 2v11.500l-6 2.500-3-1z" fill="url(#gfo)"/><path d="M10 9h2M11.500 9v4h1" stroke="#444" fill="none"/><rect x="6.500" y="7" width="3.500" height="3.500" fill="#fff" stroke="#0000c8" stroke-width="1.200"/><rect x="12.500" y="6.500" width="3" height="3" fill="#fff" stroke="#00a000" stroke-width="1.200"/><rect x="13" y="11.500" width="3" height="3" fill="#fff" stroke="#00a000" stroke-width="1.200"/></svg>
<div class="a t " style="left:1192px;top:310px;height:16px;line-height:16px;">双稳态指令</div>
<svg style="left:1148px;top:330px" width="9" height="9" viewBox="0 0 9 9"><rect x="0.500" y="0.500" width="8" height="8" fill="#fff" stroke="#000"/><path d="M2 4.500h5M4.500 2v5" stroke="#000"/></svg>
<svg style="left:1166px;top:326px" width="18" height="16" viewBox="0 0 18 16"><defs><linearGradient id="gfo" x1="0" y1="0" x2="1" y2="0"><stop offset="0" stop-color="#f3d688"/><stop offset="0.550" stop-color="#f6e0a0"/><stop offset="1" stop-color="#fbf0d0"/></linearGradient></defs><path d="M0 0h7.500l1.500 2v11.500l-6 2.500-3-1z" fill="url(#gfo)"/><path d="M10 9h2M11.500 9v4h1" stroke="#444" fill="none"/><rect x="6.500" y="7" width="3.500" height="3.500" fill="#fff" stroke="#0000c8" stroke-width="1.200"/><rect x="12.500" y="6.500" width="3" height="3" fill="#fff" stroke="#00a000" stroke-width="1.200"/><rect x="13" y="11.500" width="3" height="3" fill="#fff" stroke="#00a000" stroke-width="1.200"/></svg>
<div class="a t " style="left:1192px;top:326px;height:16px;line-height:16px;">地址指令</div>
<svg style="left:1148px;top:346px" width="9" height="9" viewBox="0 0 9 9"><rect x="0.500" y="0.500" width="8" height="8" fill="#fff" stroke="#000"/><path d="M2 4.500h5M4.500 2v5" stroke="#000"/></svg>
<svg style="left:1166px;top:342px" width="18" height="16" viewBox="0 0 18 16"><defs><linearGradient id="gfo" x1="0" y1="0" x2="1" y2="0"><stop offset="0" stop-color="#f3d688"/><stop offset="0.550" stop-color="#f6e0a0"/><stop offset="1" stop-color="#fbf0d0"/></linearGradient></defs><path d="M0 0h7.500l1.500 2v11.500l-6 2.500-3-1z" fill="url(#gfo)"/><path d="M10 9h2M11.500 9v4h1" stroke="#444" fill="none"/><rect x="6.500" y="7" width="3.500" height="3.500" fill="#fff" stroke="#0000c8" stroke-width="1.200"/><rect x="12.500" y="6.500" width="3" height="3" fill="#fff" stroke="#00a000" stroke-width="1.200"/><rect x="13" y="11.500" width="3" height="3" fill="#fff" stroke="#00a000" stroke-width="1.200"/></svg>
<div class="a t " style="left:1192px;top:342px;height:16px;line-height:16px;">复制及初始化指令</div>
<svg style="left:1148px;top:362px" width="9" height="9" viewBox="0 0 9 9"><rect x="0.500" y="0.500" width="8" height="8" fill="#fff" stroke="#000"/><path d="M2 4.500h5M4.500 2v5" stroke="#000"/></svg>
<svg style="left:1166px;top:358px" width="18" height="16" viewBox="0 0 18 16"><defs><linearGradient id="gfo" x1="0" y1="0" x2="1" y2="0"><stop offset="0" stop-color="#f3d688"/><stop offset="0.550" stop-color="#f6e0a0"/><stop offset="1" stop-color="#fbf0d0"/></linearGradient></defs><path d="M0 0h7.500l1.500 2v11.500l-6 2.500-3-1z" fill="url(#gfo)"/><path d="M10 9h2M11.500 9v4h1" stroke="#444" fill="none"/><rect x="6.500" y="7" width="3.500" height="3.500" fill="#fff" stroke="#0000c8" stroke-width="1.200"/><rect x="12.500" y="6.500" width="3" height="3" fill="#fff" stroke="#00a000" stroke-width="1.200"/><rect x="13" y="11.500" width="3" height="3" fill="#fff" stroke="#00a000" stroke-width="1.200"/></svg>
<div class="a t " style="left:1192px;top:358px;height:16px;line-height:16px;">大小信息指令</div>
<svg style="left:1148px;top:378px" width="9" height="9" viewBox="0 0 9 9"><rect x="0.500" y="0.500" width="8" height="8" fill="#fff" stroke="#000"/><path d="M2 4.500h5M4.500 2v5" stroke="#000"/></svg>
<svg style="left:1166px;top:374px" width="18" height="16" viewBox="0 0 18 16"><defs><linearGradient id="gfo" x1="0" y1="0" x2="1" y2="0"><stop offset="0" stop-color="#f3d688"/><stop offset="0.550" stop-color="#f6e0a0"/><stop offset="1" stop-color="#fbf0d0"/></linearGradient></defs><path d="M0 0h7.500l1.500 2v11.500l-6 2.500-3-1z" fill="url(#gfo)"/><path d="M10 9h2M11.500 9v4h1" stroke="#444" fill="none"/><rect x="6.500" y="7" width="3.500" height="3.500" fill="#fff" stroke="#0000c8" stroke-width="1.200"/><rect x="12.500" y="6.500" width="3" height="3" fill="#fff" stroke="#00a000" stroke-width="1.200"/><rect x="13" y="11.500" width="3" height="3" fill="#fff" stroke="#00a000" stroke-width="1.200"/></svg>
<div class="a t " style="left:1192px;top:374px;height:16px;line-height:16px;">字符串指令</div>
<svg style="left:1148px;top:394px" width="9" height="9" viewBox="0 0 9 9"><rect x="0.500" y="0.500" width="8" height="8" fill="#fff" stroke="#000"/><path d="M2 4.500h5M4.500 2v5" stroke="#000"/></svg>
<svg style="left:1166px;top:390px" width="18" height="16" viewBox="0 0 18 16"><defs><linearGradient id="gfo" x1="0" y1="0" x2="1" y2="0"><stop offset="0" stop-color="#f3d688"/><stop offset="0.550" stop-color="#f6e0a0"/><stop offset="1" stop-color="#fbf0d0"/></linearGradient></defs><path d="M0 0h7.500l1.500 2v11.500l-6 2.500-3-1z" fill="url(#gfo)"/><path d="M10 9h2M11.500 9v4h1" stroke="#444" fill="none"/><rect x="6.500" y="7" width="3.500" height="3.500" fill="#fff" stroke="#0000c8" stroke-width="1.200"/><rect x="12.500" y="6.500" width="3" height="3" fill="#fff" stroke="#00a000" stroke-width="1.200"/><rect x="13" y="11.500" width="3" height="3" fill="#fff" stroke="#00a000" stroke-width="1.200"/></svg>
<div class="a t " style="left:1192px;top:390px;height:16px;line-height:16px;">存储器设备指令</div>
<svg style="left:1148px;top:410px" width="9" height="9" viewBox="0 0 9 9"><rect x="0.500" y="0.500" width="8" height="8" fill="#fff" stroke="#000"/><path d="M2 4.500h5M4.500 2v5" stroke="#000"/></svg>
<svg style="left:1166px;top:406px" width="18" height="16" viewBox="0 0 18 16"><defs><linearGradient id="gfo" x1="0" y1="0" x2="1" y2="0"><stop offset="0" stop-color="#f3d688"/><stop offset="0.550" stop-color="#f6e0a0"/><stop offset="1" stop-color="#fbf0d0"/></linearGradient></defs><path d="M0 0h7.500l1.500 2v11.500l-6 2.500-3-1z" fill="url(#gfo)"/><path d="M10 9h2M11.500 9v4h1" stroke="#444" fill="none"/><rect x="6.500" y="7" width="3.500" height="3.500" fill="#fff" stroke="#0000c8" stroke-width="1.200"/><rect x="12.500" y="6.500" width="3" height="3" fill="#fff" stroke="#00a000" stroke-width="1.200"/><rect x="13" y="11.500" width="3" height="3" fill="#fff" stroke="#00a000" stroke-width="1.200"/></svg>
<div class="a t " style="left:1192px;top:406px;height:16px;line-height:16px;">定时器指令</div>
<svg style="left:1148px;top:426px" width="9" height="9" viewBox="0 0 9 9"><rect x="0.500" y="0.500" width="8" height="8" fill="#fff" stroke="#000"/><path d="M2 4.500h5M4.500 2v5" stroke="#000"/></svg>
<svg style="left:1166px;top:422px" width="18" height="16" viewBox="0 0 18 16"><defs><linearGradient id="gfo" x1="0" y1="0" x2="1" y2="0"><stop offset="0" stop-color="#f3d688"/><stop offset="0.550" stop-color="#f6e0a0"/><stop offset="1" stop-color="#fbf0d0"/></linearGradient></defs><path d="M0 0h7.500l1.500 2v11.500l-6 2.500-3-1z" fill="url(#gfo)"/><path d="M10 9h2M11.500 9v4h1" stroke="#444" fill="none"/><rect x="6.500" y="7" width="3.500" height="3.500" fill="#fff" stroke="#0000c8" stroke-width="1.200"/><rect x="12.500" y="6.500" width="3" height="3" fill="#fff" stroke="#00a000" stroke-width="1.200"/><rect x="13" y="11.500" width="3" height="3" fill="#fff" stroke="#00a000" stroke-width="1.200"/></svg>
<div class="a t " style="left:1192px;top:422px;height:16px;line-height:16px;">指针指令</div>
<svg style="left:1148px;top:442px" width="9" height="9" viewBox="0 0 9 9"><rect x="0.500" y="0.500" width="8" height="8" fill="#fff" stroke="#000"/><path d="M2 4.500h5M4.500 2v5" stroke="#000"/></svg>
<svg style="left:1166px;top:438px" width="18" height="16" viewBox="0 0 18 16"><defs><linearGradient id="gfo" x1="0" y1="0" x2="1" y2="0"><stop offset="0" stop-color="#f3d688"/><stop offset="0.550" stop-color="#f6e0a0"/><stop offset="1" stop-color="#fbf0d0"/></linearGradient></defs><path d="M0 0h7.500l1.500 2v11.500l-6 2.500-3-1z" fill="url(#gfo)"/><path d="M10 9h2M11.500 9v4h1" stroke="#444" fill="none"/><rect x="6.500" y="7" width="3.500" height="3.500" fill="#fff" stroke="#0000c8" stroke-width="1.200"/><rect x="12.500" y="6.500" width="3" height="3" fill="#fff" stroke="#00a000" stroke-width="1.200"/><rect x="13" y="11.500" width="3" height="3" fill="#fff" stroke="#00a000" stroke-width="1.200"/></svg>
<div class="a t " style="left:1192px;top:438px;height:16px;line-height:16px;">数值运算指令</div>
<svg style="left:1148px;top:458px" width="9" height="9" viewBox="0 0 9 9"><rect x="0.500" y="0.500" width="8" height="8" fill="#fff" stroke="#000"/><path d="M2 4.500h5M4.500 2v5" stroke="#000"/></svg>
<svg style="left:1166px;top:454px" width="18" height="16" viewBox="0 0 18 16"><defs><linearGradient id="gfo" x1="0" y1="0" x2="1" y2="0"><stop offset="0" stop-color="#f3d688"/><stop offset="0.550" stop-color="#f6e0a0"/><stop offset="1" stop-color="#fbf0d0"/></linearGradient></defs><path d="M0 0h7.500l1.500 2v11.500l-6 2.500-3-1z" fill="url(#gfo)"/><path d="M10 9h2M11.500 9v4h1" stroke="#444" fill="none"/><rect x="6.500" y="7" width="3.500" height="3.500" fill="#fff" stroke="#0000c8" stroke-width="1.200"/><rect x="12.500" y="6.500" width="3" height="3" fill="#fff" stroke="#00a000" stroke-width="1.200"/><rect x="13" y="11.500" width="3" height="3" fill="#fff" stroke="#00a000" stroke-width="1.200"/></svg>
<div class="a t " style="left:1192px;top:454px;height:16px;line-height:16px;">数据表位指令</div>
<svg style="left:1148px;top:474px" width="9" height="9" viewBox="0 0 9 9"><rect x="0.500" y="0.500" width="8" height="8" fill="#fff" stroke="#000"/><path d="M2 4.500h5M4.500 2v5" stroke="#000"/></svg>
<svg style="left:1166px;top:470px" width="18" height="16" viewBox="0 0 18 16"><defs><linearGradient id="gfo" x1="0" y1="0" x2="1" y2="0"><stop offset="0" stop-color="#f3d688"/><stop offset="0.550" stop-color="#f6e0a0"/><stop offset="1" stop-color="#fbf0d0"/></linearGradient></defs><path d="M0 0h7.500l1.500 2v11.500l-6 2.500-3-1z" fill="url(#gfo)"/><path d="M10 9h2M11.500 9v4h1" stroke="#444" fill="none"/><rect x="6.500" y="7" width="3.500" height="3.500" fill="#fff" stroke="#0000c8" stroke-width="1.200"/><rect x="12.500" y="6.500" width="3" height="3" fill="#fff" stroke="#00a000" stroke-width="1.200"/><rect x="13" y="11.500" width="3" height="3" fill="#fff" stroke="#00a000" stroke-width="1.200"/></svg>
<div class="a t " style="left:1192px;top:470px;height:16px;line-height:16px;">日期时间指令</div>
<svg style="left:1148px;top:490px" width="9" height="9" viewBox="0 0 9 9"><rect x="0.500" y="0.500" width="8" height="8" fill="#fff" stroke="#000"/><path d="M2 4.500h5M4.500 2v5" stroke="#000"/></svg>
<svg style="left:1166px;top:486px" width="18" height="16" viewBox="0 0 18 16"><defs><linearGradient id="gfo" x1="0" y1="0" x2="1" y2="0"><stop offset="0" stop-color="#f3d688"/><stop offset="0.550" stop-color="#f6e0a0"/><stop offset="1" stop-color="#fbf0d0"/></linearGradient></defs><path d="M0 0h7.500l1.500 2v11.500l-6 2.500-3-1z" fill="url(#gfo)"/><path d="M10 9h2M11.500 9v4h1" stroke="#444" fill="none"/><rect x="6.500" y="7" width="3.500" height="3.500" fill="#fff" stroke="#0000c8" stroke-width="1.200"/><rect x="12.500" y="6.500" width="3" height="3" fill="#fff" stroke="#00a000" stroke-width="1.200"/><rect x="13" y="11.500" width="3" height="3" fill="#fff" stroke="#00a000" stroke-width="1.200"/></svg>
<div class="a t " style="left:1192px;top:486px;height:16px;line-height:16px;">比较指令</div>
<svg style="left:1148px;top:506px" width="9" height="9" viewBox="0 0 9 9"><rect x="0.500" y="0.500" width="8" height="8" fill="#fff" stroke="#000"/><path d="M2 4.500h5M4.500 2v5" stroke="#000"/></svg>
<svg style="left:1166px;top:502px" width="18" height="16" viewBox="0 0 18 16"><defs><linearGradient id="gfo" x1="0" y1="0" x2="1" y2="0"><stop offset="0" stop-color="#f3d688"/><stop offset="0.550" stop-color="#f6e0a0"/><stop offset="1" stop-color="#fbf0d0"/></linearGradient></defs><path d="M0 0h7.500l1.500 2v11.500l-6 2.500-3-1z" fill="url(#gfo)"/><path d="M10 9h2M11.500 9v4h1" stroke="#444" fill="none"/><rect x="6.500" y="7" width="3.500" height="3.500" fill="#fff" stroke="#0000c8" stroke-width="1.200"/><rect x="12.500" y="6.500" width="3" height="3" fill="#fff" stroke="#00a000" stroke-width="1.200"/><rect x="13" y="11.500" width="3" height="3" fill="#fff" stroke="#00a000" stroke-width="1.200"/></svg>
<div class="a t " style="left:1192px;top:502px;height:16px;line-height:16px;">特殊指令</div>
<svg style="left:1148px;top:522px" width="9" height="9" viewBox="0 0 9 9"><rect x="0.500" y="0.500" width="8" height="8" fill="#fff" stroke="#000"/><path d="M2 4.500h5M4.500 2v5" stroke="#000"/></svg>
<svg style="left:1166px;top:518px" width="18" height="16" viewBox="0 0 18 16"><defs><linearGradient id="gfo" x1="0" y1="0" x2="1" y2="0"><stop offset="0" stop-color="#f3d688"/><stop offset="0.550" stop-color="#f6e0a0"/><stop offset="1" stop-color="#fbf0d0"/></linearGradient></defs><path d="M0 0h7.500l1.500 2v11.500l-6 2.500-3-1z" fill="url(#gfo)"/><path d="M10 9h2M11.500 9v4h1" stroke="#444" fill="none"/><rect x="6.500" y="7" width="3.500" height="3.500" fill="#fff" stroke="#0000c8" stroke-width="1.200"/><rect x="12.500" y="6.500" width="3" height="3" fill="#fff" stroke="#00a000" stroke-width="1.200"/><rect x="13" y="11.500" width="3" height="3" fill="#fff" stroke="#00a000" stroke-width="1.200"/></svg>
<div class="a t " style="left:1192px;top:518px;height:16px;line-height:16px;">移位指令</div>
<svg style="left:1148px;top:538px" width="9" height="9" viewBox="0 0 9 9"><rect x="0.500" y="0.500" width="8" height="8" fill="#fff" stroke="#000"/><path d="M2 4.500h5M4.500 2v5" stroke="#000"/></svg>
<svg style="left:1166px;top:534px" width="18" height="16" viewBox="0 0 18 16"><defs><linearGradient id="gfo" x1="0" y1="0" x2="1" y2="0"><stop offset="0" stop-color="#f3d688"/><stop offset="0.550" stop-color="#f6e0a0"/><stop offset="1" stop-color="#fbf0d0"/></linearGradient></defs><path d="M0 0h7.500l1.500 2v11.500l-6 2.500-3-1z" fill="url(#gfo)"/><path d="M10 9h2M11.500 9v4h1" stroke="#444" fill="none"/><rect x="6.500" y="7" width="3.500" height="3.500" fill="#fff" stroke="#0000c8" stroke-width="1.200"/><rect x="12.500" y="6.500" width="3" height="3" fill="#fff" stroke="#00a000" stroke-width="1.200"/><rect x="13" y="11.500" width="3" height="3" fill="#fff" stroke="#00a000" stroke-width="1.200"/></svg>
<div class="a t " style="left:1192px;top:534px;height:16px;line-height:16px;">程序执行控制指令</div>
<svg style="left:1148px;top:554px" width="9" height="9" viewBox="0 0 9 9"><rect x="0.500" y="0.500" width="8" height="8" fill="#fff" stroke="#000"/><path d="M2 4.500h5M4.500 2v5" stroke="#000"/></svg>
<svg style="left:1166px;top:550px" width="18" height="16" viewBox="0 0 18 16"><defs><linearGradient id="gfo" x1="0" y1="0" x2="1" y2="0"><stop offset="0" stop-color="#f3d688"/><stop offset="0.550" stop-color="#f6e0a0"/><stop offset="1" stop-color="#fbf0d0"/></linearGradient></defs><path d="M0 0h7.500l1.500 2v11.500l-6 2.500-3-1z" fill="url(#gfo)"/><path d="M10 9h2M11.500 9v4h1" stroke="#444" fill="none"/><rect x="6.500" y="7" width="3.500" height="3.500" fill="#fff" stroke="#0000c8" stroke-width="1.200"/><rect x="12.500" y="6.500" width="3" height="3" fill="#fff" stroke="#00a000" stroke-width="1.200"/><rect x="13" y="11.500" width="3" height="3" fill="#fff" stroke="#00a000" stroke-width="1.200"/></svg>
<div class="a t " style="left:1192px;top:550px;height:16px;line-height:16px;">程序控制模式通信指令</div>
<svg style="left:1148px;top:570px" width="9" height="9" viewBox="0 0 9 9"><rect x="0.500" y="0.500" width="8" height="8" fill="#fff" stroke="#000"/><path d="M2 4.500h5M4.500 2v5" stroke="#000"/></svg>
<svg style="left:1166px;top:566px" width="18" height="16" viewBox="0 0 18 16"><defs><linearGradient id="gfo" x1="0" y1="0" x2="1" y2="0"><stop offset="0" stop-color="#f3d688"/><stop offset="0.550" stop-color="#f6e0a0"/><stop offset="1" stop-color="#fbf0d0"/></linearGradient></defs><path d="M0 0h7.500l1.500 2v11.500l-6 2.500-3-1z" fill="url(#gfo)"/><path d="M10 9h2M11.500 9v4h1" stroke="#444" fill="none"/><rect x="6.500" y="7" width="3.500" height="3.500" fill="#fff" stroke="#0000c8" stroke-width="1.200"/><rect x="12.500" y="6.500" width="3" height="3" fill="#fff" stroke="#00a000" stroke-width="1.200"/><rect x="13" y="11.500" width="3" height="3" fill="#fff" stroke="#00a000" stroke-width="1.200"/></svg>
<div class="a t " style="left:1192px;top:566px;height:16px;line-height:16px;">系统寄存器指令</div>
<svg style="left:1148px;top:586px" width="9" height="9" viewBox="0 0 9 9"><rect x="0.500" y="0.500" width="8" height="8" fill="#fff" stroke="#000"/><path d="M2 4.500h5M4.500 2v5" stroke="#000"/></svg>
<svg style="left:1166px;top:582px" width="18" height="16" viewBox="0 0 18 16"><defs><linearGradient id="gfo" x1="0" y1="0" x2="1" y2="0"><stop offset="0" stop-color="#f3d688"/><stop offset="0.550" stop-color="#f6e0a0"/><stop offset="1" stop-color="#fbf0d0"/></linearGradient></defs><path d="M0 0h7.500l1.500 2v11.500l-6 2.500-3-1z" fill="url(#gfo)"/><path d="M10 9h2M11.500 9v4h1" stroke="#444" fill="none"/><rect x="6.500" y="7" width="3.500" height="3.500" fill="#fff" stroke="#0000c8" stroke-width="1.200"/><rect x="12.500" y="6.500" width="3" height="3" fill="#fff" stroke="#00a000" stroke-width="1.200"/><rect x="13" y="11.500" width="3" height="3" fill="#fff" stroke="#00a000" stroke-width="1.200"/></svg>
<div class="a t " style="left:1192px;top:582px;height:16px;line-height:16px;">编译器指令</div>
<svg style="left:1148px;top:602px" width="9" height="9" viewBox="0 0 9 9"><rect x="0.500" y="0.500" width="8" height="8" fill="#fff" stroke="#000"/><path d="M2 4.500h5M4.500 2v5" stroke="#000"/></svg>
<svg style="left:1166px;top:598px" width="18" height="16" viewBox="0 0 18 16"><defs><linearGradient id="gfo" x1="0" y1="0" x2="1" y2="0"><stop offset="0" stop-color="#f3d688"/><stop offset="0.550" stop-color="#f6e0a0"/><stop offset="1" stop-color="#fbf0d0"/></linearGradient></defs><path d="M0 0h7.500l1.500 2v11.500l-6 2.500-3-1z" fill="url(#gfo)"/><path d="M10 9h2M11.500 9v4h1" stroke="#444" fill="none"/><rect x="6.500" y="7" width="3.500" height="3.500" fill="#fff" stroke="#0000c8" stroke-width="1.200"/><rect x="12.500" y="6.500" width="3" height="3" fill="#fff" stroke="#00a000" stroke-width="1.200"/><rect x="13" y="11.500" width="3" height="3" fill="#fff" stroke="#00a000" stroke-width="1.200"/></svg>
<div class="a t " style="left:1192px;top:598px;height:16px;line-height:16px;">脉冲输出指令</div>
<svg style="left:1148px;top:618px" width="9" height="9" viewBox="0 0 9 9"><rect x="0.500" y="0.500" width="8" height="8" fill="#fff" stroke="#000"/><path d="M2 4.500h5M4.500 2v5" stroke="#000"/></svg>
<svg style="left:1166px;top:614px" width="18" height="16" viewBox="0 0 18 16"><defs><linearGradient id="gfo" x1="0" y1="0" x2="1" y2="0"><stop offset="0" stop-color="#f3d688"/><stop offset="0.550" stop-color="#f6e0a0"/><stop offset="1" stop-color="#fbf0d0"/></linearGradient></defs><path d="M0 0h7.500l1.500 2v11.500l-6 2.500-3-1z" fill="url(#gfo)"/><path d="M10 9h2M11.500 9v4h1" stroke="#444" fill="none"/><rect x="6.500" y="7" width="3.500" height="3.500" fill="#fff" stroke="#0000c8" stroke-width="1.200"/><rect x="12.500" y="6.500" width="3" height="3" fill="#fff" stroke="#00a000" stroke-width="1.200"/><rect x="13" y="11.500" width="3" height="3" fill="#fff" stroke="#00a000" stroke-width="1.200"/></svg>
<div class="a t " style="left:1192px;top:614px;height:16px;line-height:16px;">计数器指令</div>
<svg style="left:1148px;top:634px" width="9" height="9" viewBox="0 0 9 9"><rect x="0.500" y="0.500" width="8" height="8" fill="#fff" stroke="#000"/><path d="M2 4.500h5M4.500 2v5" stroke="#000"/></svg>
<svg style="left:1166px;top:630px" width="18" height="16" viewBox="0 0 18 16"><defs><linearGradient id="gfo" x1="0" y1="0" x2="1" y2="0"><stop offset="0" stop-color="#f3d688"/><stop offset="0.550" stop-color="#f6e0a0"/><stop offset="1" stop-color="#fbf0d0"/></linearGradient></defs><path d="M0 0h7.500l1.500 2v11.500l-6 2.500-3-1z" fill="url(#gfo)"/><path d="M10 9h2M11.500 9v4h1" stroke="#444" fill="none"/><rect x="6.500" y="7" width="3.500" height="3.500" fill="#fff" stroke="#0000c8" stroke-width="1.200"/><rect x="12.500" y="6.500" width="3" height="3" fill="#fff" stroke="#00a000" stroke-width="1.200"/><rect x="13" y="11.500" width="3" height="3" fill="#fff" stroke="#00a000" stroke-width="1.200"/></svg>
<div class="a t " style="left:1192px;top:630px;height:16px;line-height:16px;">转换指令</div>
<svg style="left:1148px;top:650px" width="9" height="9" viewBox="0 0 9 9"><rect x="0.500" y="0.500" width="8" height="8" fill="#fff" stroke="#000"/><path d="M2 4.500h5M4.500 2v5" stroke="#000"/></svg>
<svg style="left:1166px;top:646px" width="18" height="16" viewBox="0 0 18 16"><defs><linearGradient id="gfo" x1="0" y1="0" x2="1" y2="0"><stop offset="0" stop-color="#f3d688"/><stop offset="0.550" stop-color="#f6e0a0"/><stop offset="1" stop-color="#fbf0d0"/></linearGradient></defs><path d="M0 0h7.500l1.500 2v11.500l-6 2.500-3-1z" fill="url(#gfo)"/><path d="M10 9h2M11.500 9v4h1" stroke="#444" fill="none"/><rect x="6.500" y="7" width="3.500" height="3.500" fill="#fff" stroke="#0000c8" stroke-width="1.200"/><rect x="12.500" y="6.500" width="3" height="3" fill="#fff" stroke="#00a000" stroke-width="1.200"/><rect x="13" y="11.500" width="3" height="3" fill="#fff" stroke="#00a000" stroke-width="1.200"/></svg>
<div class="a t " style="left:1192px;top:646px;height:16px;line-height:16px;">输入、输出和单元存取指令</div>
<div class="a dot" style="left:1396px;top:214px;width:16px;height:449px;"></div>
<div class="a btn" style="left:1396px;top:214px;width:16px;height:16px;"><svg style="left:50%;top:50%;margin-left:-3.5px;margin-top:-3px" width="7" height="6" viewBox="0 0 7 6"><path d="M0 5h7L3.500 1z" fill="#000"/></svg></div>
<div class="a btn" style="left:1396px;top:230px;width:16px;height:353px;"></div>
<div class="a btn" style="left:1396px;top:647px;width:16px;height:16px;"><svg style="left:50%;top:50%;margin-left:-3.5px;margin-top:-3px" width="7" height="6" viewBox="0 0 7 6"><path d="M0 1h7L3.500 5z" fill="#000"/></svg></div>
<div class="a " style="left:1412px;top:150px;width:1px;height:550px;background:#8c99b8"></div>
<div class="a " style="left:1140px;top:150px;width:1px;height:550px;background:#8c99b8"></div>
<div class="a " style="left:1140px;top:664px;width:272px;height:36px;background:#d6dbe9"></div>
<div class="a " style="left:1140px;top:664px;width:136px;height:36px;background:#d6dbe9;border:1px solid #aab4cc"></div>
<div class="a " style="left:1277px;top:664px;width:136px;height:36px;background:#d6dbe9;border:1px solid #aab4cc"></div>
<div class="a t " style="left:1178px;top:675px;height:16px;line-height:16px;color:#a0a0a0">不带<span class="l">EN/ENO</span></div>
<div class="a t b" style="left:1315px;top:675px;height:16px;line-height:16px;color:#a0a0a0">带<span class="l" style="letter-spacing:0.6px">EN/ENO</span></div>
<div class="a " style="left:1140px;top:700px;width:74px;height:21px;background:#fff"></div>
<div class="a " style="left:1214px;top:700px;width:153px;height:21px;background:#4d6082"></div>
<svg style="left:1144px;top:703px" width="16" height="16" viewBox="0 0 16 16"><path d="M0.500 2.500h12v10.500l-1 1.500h-10l-1-1.500z" fill="#fdfdff" stroke="#93a3c4" stroke-width="0.800"/><path d="M0.500 12.500l1 2h10l1-2" stroke="#44608c" stroke-width="1.500" fill="none"/><path d="M1.500 2.500c0-2.500 2-2.500 2 0M4.500 2.500c0-2.500 2-2.500 2 0M7.500 2.500c0-2.500 2-2.500 2 0M10.500 2.500c0-2.500 2-2.500 2 0" stroke="#f0a020" fill="none" stroke-width="1.100"/><path d="M6 6h4.500M8.500 6v5h2" stroke="#333" fill="none"/><rect x="1.500" y="3.500" width="4.500" height="5" fill="#fff" stroke="#0000c8" stroke-width="1.300"/><rect x="11.500" y="4" width="3" height="3" fill="#fff" stroke="#00a000" stroke-width="1.100"/><rect x="11.500" y="9" width="3" height="3" fill="#fff" stroke="#00a000" stroke-width="1.100"/></svg>
<div class="a t " style="left:1163px;top:704px;height:16px;line-height:16px;">指令列表</div>
<svg style="left:1219px;top:703px" width="16" height="16" viewBox="0 0 16 16"><path d="M0.500 2.500h12v10.500l-1 1.500h-10l-1-1.500z" fill="#fdfdff" stroke="#93a3c4" stroke-width="0.800"/><path d="M0.500 12.500l1 2h10l1-2" stroke="#44608c" stroke-width="1.500" fill="none"/><path d="M1.500 2.500c0-2.500 2-2.500 2 0M4.500 2.500c0-2.500 2-2.500 2 0M7.500 2.500c0-2.500 2-2.500 2 0M10.500 2.500c0-2.500 2-2.500 2 0" stroke="#f0a020" fill="none" stroke-width="1.100"/><path d="M2.500 4.500h2.300a1.800 1.800 0 1 1 3.400 0h2.300v2.300a1.800 1.800 0 1 1 0 3.400v2.300H8.200a1.600 1.600 0 1 0-3.400 0H2.500v-2.500a1.600 1.600 0 1 0 0-3z" fill="#3aa0dc" stroke="#2080c0" stroke-width="0.500"/></svg>
<div class="a t " style="left:1239px;top:704px;height:16px;line-height:16px;color:#fff">模板列表</div>
<svg style="left:1296px;top:703px" width="16" height="16" viewBox="0 0 16 16"><path d="M0.500 2.500h12v10.500l-1 1.500h-10l-1-1.500z" fill="#fdfdff" stroke="#93a3c4" stroke-width="0.800"/><path d="M0.500 12.500l1 2h10l1-2" stroke="#44608c" stroke-width="1.500" fill="none"/><path d="M1.500 2.500c0-2.500 2-2.500 2 0M4.500 2.500c0-2.500 2-2.500 2 0M7.500 2.500c0-2.500 2-2.500 2 0M10.500 2.500c0-2.500 2-2.500 2 0" stroke="#f0a020" fill="none" stroke-width="1.100"/><rect x="4" y="9" width="5" height="5" fill="#f0a428"/><rect x="7" y="6" width="5" height="5" fill="#e838d0"/><rect x="10" y="3" width="5.500" height="5" fill="#3858f0"/></svg>
<div class="a t " style="left:1315px;top:704px;height:16px;line-height:16px;color:#fff">变量列表</div>
</body></html>
